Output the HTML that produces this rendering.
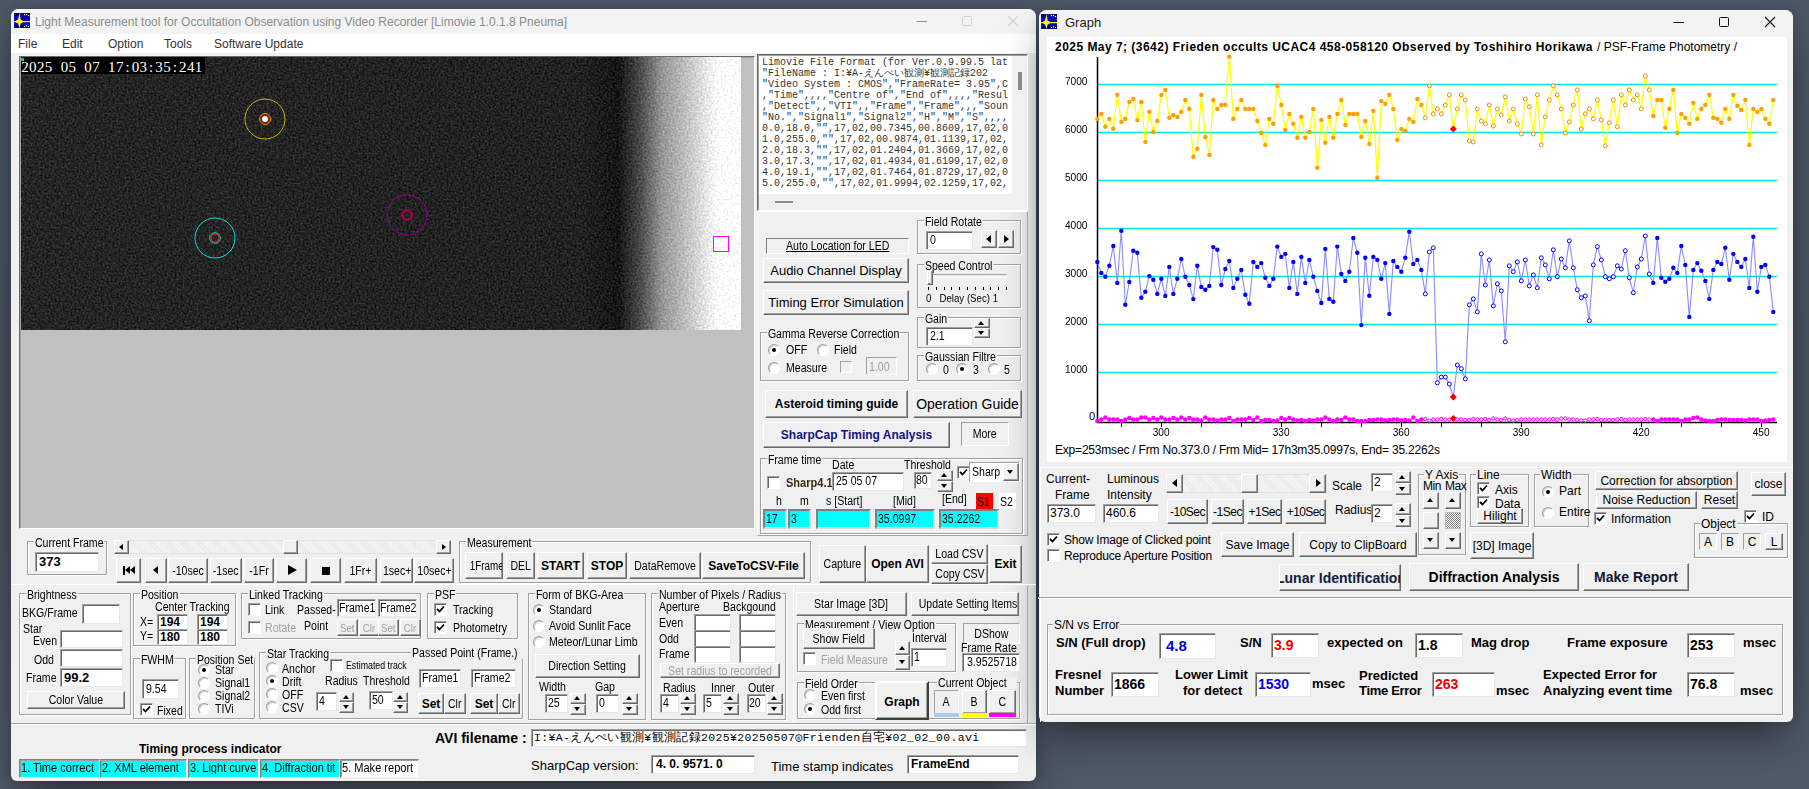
<!DOCTYPE html><html><head><meta charset="utf-8"><style>
*{margin:0;padding:0;box-sizing:border-box}
html,body{width:1809px;height:789px;overflow:hidden}
body{position:relative;background:#4c5664;font-family:"Liberation Sans",sans-serif;}
.t{position:absolute;white-space:nowrap}
.btn{position:absolute;background:#f0f0f0;border:1px solid;border-color:#fff #696969 #696969 #fff;box-shadow:inset -1px -1px 0 #a0a0a0;text-align:center;white-space:nowrap;overflow:hidden}
.ed{position:absolute;background:#fff;border:1px solid;border-color:#a0a0a0 #e8e8e8 #e8e8e8 #a0a0a0;box-shadow:inset 1px 1px 0 #696969;white-space:nowrap;overflow:hidden}
.gb{position:absolute;border:1px solid #a0a0a0;box-shadow:inset 1px 1px 0 #fff, 1px 1px 0 #fff}
.gl{position:absolute;background:#f0f0f0;padding:0 1px;white-space:nowrap}
.cb{position:absolute;width:13px;height:13px;background:#fff;border:1px solid;border-color:#a0a0a0 #fff #fff #a0a0a0;box-shadow:inset 1px 1px 0 #696969}
.rb{position:absolute;width:12px;height:12px;border-radius:6px;background:#fff;border:1px solid;border-color:#a0a0a0 #fff #fff #a0a0a0;box-shadow:inset 1px 1px 0 #d0d0d0}
.tri{position:absolute;width:0;height:0;border-left:3.5px solid transparent;border-right:3.5px solid transparent}
.tri.up{border-bottom:4px solid #000}
.tri.dn{border-top:4px solid #000}
.win{position:absolute;background:#f0f0f0;overflow:hidden}
</style></head><body><div style="position:absolute;left:0;top:0;width:1809px;height:789px;background:linear-gradient(180deg,#4d5765 0%,#4a5360 60%,#505a68 100%)"></div>
<div class="win" style="left:11px;top:9px;width:1025px;height:772px;border-radius:8px 8px 6px 6px;box-shadow:0 20px 40px -8px rgba(0,0,0,0.5), 0 0 12px rgba(0,0,0,0.12)"></div>
<div style="position:absolute;left:11px;top:9px;width:1025px;height:25px;background:#f3f3f3;border-radius:8px 8px 0 0"></div>
<div style="position:absolute;left:11px;top:34px;width:1025px;height:19px;background:#fff"></div>
<div class="win" style="left:1039px;top:10px;width:754px;height:712px;border-radius:8px 8px 6px 6px;box-shadow:0 20px 40px -8px rgba(0,0,0,0.5), 0 0 12px rgba(0,0,0,0.12)"></div>
<div style="position:absolute;left:1039px;top:10px;width:754px;height:27px;background:#f3f3f3;border-radius:8px 8px 0 0"></div>
<svg style="position:absolute;left:14px;top:12px" width="17" height="17" viewBox="0 0 17 17"><rect x="0" y="1" width="16" height="15" fill="#0a0ac8"/><rect x="0" y="1" width="5" height="3" fill="#000060"/><rect x="9" y="1" width="7" height="2" fill="#000060"/><rect x="1" y="13" width="15" height="3" fill="#000070"/><rect x="8" y="4" width="7" height="4" fill="#0000a0"/><circle cx="10.5" cy="2.5" r="0.7" fill="#fff"/><circle cx="12.5" cy="2.5" r="0.7" fill="#fff"/><circle cx="14.5" cy="3.5" r="0.7" fill="#fff"/><circle cx="10.5" cy="14.5" r="0.7" fill="#fff"/><circle cx="12.5" cy="14" r="0.7" fill="#fff"/><circle cx="14.5" cy="14.5" r="0.7" fill="#fff"/><rect x="0" y="9" width="16" height="1.2" fill="#ffff00"/><path d="M5.4 0.5 L6.6 7.5 L10 9.6 L6.6 11.6 L5.4 16.5 L4.2 11.6 L0.5 9.6 L4.2 7.5 Z" fill="#ffff00"/></svg>
<svg style="position:absolute;left:1041px;top:13px" width="17" height="17" viewBox="0 0 17 17"><rect x="0" y="1" width="16" height="15" fill="#0a0ac8"/><rect x="0" y="1" width="5" height="3" fill="#000060"/><rect x="9" y="1" width="7" height="2" fill="#000060"/><rect x="1" y="13" width="15" height="3" fill="#000070"/><rect x="8" y="4" width="7" height="4" fill="#0000a0"/><circle cx="10.5" cy="2.5" r="0.7" fill="#fff"/><circle cx="12.5" cy="2.5" r="0.7" fill="#fff"/><circle cx="14.5" cy="3.5" r="0.7" fill="#fff"/><circle cx="10.5" cy="14.5" r="0.7" fill="#fff"/><circle cx="12.5" cy="14" r="0.7" fill="#fff"/><circle cx="14.5" cy="14.5" r="0.7" fill="#fff"/><rect x="0" y="9" width="16" height="1.2" fill="#ffff00"/><path d="M5.4 0.5 L6.6 7.5 L10 9.6 L6.6 11.6 L5.4 16.5 L4.2 11.6 L0.5 9.6 L4.2 7.5 Z" fill="#ffff00"/></svg>
<div class="t" style="left:35px;top:15px;font-size:12px;line-height:14px;color:#8c8c8c;">Light Measurement tool for Occultation Observation using Video Recorder [Limovie 1.0.1.8 Pneuma]</div>
<div class="t" style="left:1065px;top:16px;font-size:13px;line-height:14px;color:#1a1a1a;">Graph</div>
<svg style="position:absolute;left:916px;top:15px" width="12" height="12"><line x1="0.5" y1="6.5" x2="11" y2="6.5" stroke="#8a8a8a" stroke-width="1"/></svg>
<svg style="position:absolute;left:961px;top:15px" width="12" height="12"><rect x="1.5" y="1.5" width="9" height="9" rx="1" stroke="#cfcfcf" fill="none" stroke-width="1"/></svg>
<svg style="position:absolute;left:1007px;top:15px" width="12" height="12"><path d="M1 1 L11 11 M11 1 L1 11" stroke="#cfcfcf" stroke-width="1.1"/></svg>
<svg style="position:absolute;left:1673px;top:16px" width="12" height="12"><line x1="0.5" y1="6.5" x2="11" y2="6.5" stroke="#111" stroke-width="1"/></svg>
<svg style="position:absolute;left:1718px;top:16px" width="12" height="12"><rect x="1.5" y="1.5" width="9" height="9" rx="1" stroke="#111" fill="none" stroke-width="1"/></svg>
<svg style="position:absolute;left:1764px;top:16px" width="12" height="12"><path d="M1 1 L11 11 M11 1 L1 11" stroke="#111" stroke-width="1.1"/></svg>
<div class="t" style="left:18px;top:37px;font-size:12px;line-height:14px;color:#333;">File</div>
<div class="t" style="left:62px;top:37px;font-size:12px;line-height:14px;color:#333;">Edit</div>
<div class="t" style="left:108px;top:37px;font-size:12px;line-height:14px;color:#333;">Option</div>
<div class="t" style="left:164px;top:37px;font-size:12px;line-height:14px;color:#333;">Tools</div>
<div class="t" style="left:214px;top:37px;font-size:12px;line-height:14px;color:#333;">Software Update</div>
<div style="position:absolute;left:19px;top:56px;width:736px;height:473px;border:1px solid;border-color:#696969 #fff #fff #696969;box-shadow:inset 1px 1px 0 #a0a0a0;background:#c0c0c0"></div>
<svg style="position:absolute;left:21px;top:57px" width="720" height="273" viewBox="0 0 720 273">
<defs>
<linearGradient id="vg" x1="0" y1="0" x2="1" y2="0">
<stop offset="0" stop-color="#252525"/>
<stop offset="0.78" stop-color="#212121"/>
<stop offset="0.83" stop-color="#151515"/>
<stop offset="0.86" stop-color="#4a4a4a"/>
<stop offset="0.89" stop-color="#959595"/>
<stop offset="0.93" stop-color="#c8c8c8"/>
<stop offset="0.955" stop-color="#ececec"/>
<stop offset="0.97" stop-color="#fff"/>
<stop offset="1" stop-color="#fff"/>
</linearGradient>
<filter id="nz" x="0" y="0" width="100%" height="100%" color-interpolation-filters="sRGB">
<feTurbulence type="fractalNoise" baseFrequency="0.5" numOctaves="2" seed="3" result="t"/>
<feColorMatrix in="t" type="matrix" values="1 0 0 0 0  1 0 0 0 0  1 0 0 0 0  0 0 0 0 1" result="g"/>
<feComposite in="SourceGraphic" in2="g" operator="arithmetic" k1="0" k2="1" k3="0.34" k4="-0.17"/>
</filter>
</defs>
<rect width="720" height="273" fill="url(#vg)" filter="url(#nz)"/>
<rect x="0" y="0" width="184" height="17" fill="#000"/>
<circle cx="244" cy="62" r="20" fill="none" stroke="#c8b400" stroke-width="1"/>
<circle cx="244" cy="62" r="5.5" fill="none" stroke="#d8a000" stroke-width="1"/>
<circle cx="244" cy="62" r="4.3" fill="none" stroke="#c02000" stroke-width="1.2"/>
<circle cx="244" cy="62" r="3" fill="#fff"/>
<circle cx="194" cy="181" r="20" fill="none" stroke="#00e0e0" stroke-width="1"/>
<circle cx="194" cy="181" r="5.3" fill="none" stroke="#00e0e0" stroke-width="1"/>
<circle cx="194" cy="181" r="4" fill="none" stroke="#e02020" stroke-width="1.3"/>
<circle cx="386" cy="158" r="20" fill="none" stroke="#900090" stroke-width="1"/>
<circle cx="386" cy="158" r="5.5" fill="none" stroke="#900090" stroke-width="1"/>
<circle cx="386" cy="158" r="4.3" fill="none" stroke="#d00020" stroke-width="1.3"/>
<rect x="692.5" y="179.5" width="15" height="15" fill="none" stroke="#ff00ff" stroke-width="1"/>
</svg>
<div class="t" style="left:21px;top:60px;font-size:15px;line-height:14px;color:#fff;font-family:'Liberation Serif',serif;font-weight:normal"><span style="display:inline-block;width:7.9px;text-align:center">2</span><span style="display:inline-block;width:7.9px;text-align:center">0</span><span style="display:inline-block;width:7.9px;text-align:center">2</span><span style="display:inline-block;width:7.9px;text-align:center">5</span><span style="display:inline-block;width:7.9px;text-align:center">&nbsp;</span><span style="display:inline-block;width:7.9px;text-align:center">0</span><span style="display:inline-block;width:7.9px;text-align:center">5</span><span style="display:inline-block;width:7.9px;text-align:center">&nbsp;</span><span style="display:inline-block;width:7.9px;text-align:center">0</span><span style="display:inline-block;width:7.9px;text-align:center">7</span><span style="display:inline-block;width:7.9px;text-align:center">&nbsp;</span><span style="display:inline-block;width:7.9px;text-align:center">1</span><span style="display:inline-block;width:7.9px;text-align:center">7</span><span style="display:inline-block;width:7.9px;text-align:center">:</span><span style="display:inline-block;width:7.9px;text-align:center">0</span><span style="display:inline-block;width:7.9px;text-align:center">3</span><span style="display:inline-block;width:7.9px;text-align:center">:</span><span style="display:inline-block;width:7.9px;text-align:center">3</span><span style="display:inline-block;width:7.9px;text-align:center">5</span><span style="display:inline-block;width:7.9px;text-align:center">:</span><span style="display:inline-block;width:7.9px;text-align:center">2</span><span style="display:inline-block;width:7.9px;text-align:center">4</span><span style="display:inline-block;width:7.9px;text-align:center">1</span></div>
<div style="position:absolute;left:21px;top:58px;width:3px;height:3px;background:#20e020"></div>
<div style="position:absolute;left:757px;top:54px;width:271px;height:157px;border:1px solid;border-color:#696969 #fff #fff #696969;box-shadow:inset 1px 1px 0 #a0a0a0;background:#f0f0f0"></div>
<div style="position:absolute;left:759px;top:56px;width:253px;height:138px;background:#fff"></div>
<div class="t" style="left:762px;top:57px;font-size:10px;line-height:11px;font-family:'Liberation Mono',monospace;color:#333;overflow:hidden;width:250px;height:138px">Limovie File Format (for Ver.0.9.99.5 lat<br>&quot;FileName : I:¥A-えんぺい観測¥観測記録202<br>&quot;Video System : CMOS&quot;,&quot;FrameRate= 3.95&quot;,C<br>,&quot;Time&quot;,,,,&quot;Centre of&quot;,&quot;End of&quot;,,,,&quot;Resul<br>,&quot;Detect&quot;,,&quot;VTI&quot;,,&quot;Frame&quot;,&quot;Frame&quot;,,,&quot;Soun<br>&quot;No.&quot;,&quot;Signal1&quot;,&quot;Signal2&quot;,&quot;H&quot;,&quot;M&quot;,&quot;S&quot;,,,,<br>0.0,18.0,&quot;&quot;,17,02,00.7345,00.8609,17,02,0<br>1.0,255.0,&quot;&quot;,17,02,00.9874,01.1139,17,02,<br>2.0,18.3,&quot;&quot;,17,02,01.2404,01.3669,17,02,0<br>3.0,17.3,&quot;&quot;,17,02,01.4934,01.6199,17,02,0<br>4.0,19.1,&quot;&quot;,17,02,01.7464,01.8729,17,02,0<br>5.0,255.0,&quot;&quot;,17,02,01.9994,02.1259,17,02,</div>
<div style="position:absolute;left:1018px;top:72px;width:4px;height:18px;background:#8a8a8a"></div>
<div style="position:absolute;left:775px;top:201px;width:18px;height:2px;background:#8a8a8a"></div>
<div style="position:absolute;left:757px;top:211px;width:271px;height:325px;border:1px solid;border-color:#fff #a0a0a0 #a0a0a0 #fff"></div>
<div class="gb" style="left:917px;top:220px;width:104px;height:34px;"></div>
<div class="gl" style="left:924px;top:216px;font-size:12px;line-height:12px;background:none;padding:0"><span style="display:inline-block;background:#f0f0f0;padding:0 1px;transform:scaleX(0.88);transform-origin:0 50%">Field Rotate</span></div>
<div class="ed" style="left:926px;top:231px;width:47px;height:19px;font-size:12px;line-height:17px;color:#000;padding-left:3px;"><span style="display:inline-block;transform:scaleX(0.88);transform-origin:0 50%">0</span></div>
<div class="btn" style="left:981px;top:230px;width:16px;height:18px;font-size:12px;line-height:17px;color:#000;"><div style="position:absolute;left:4px;top:4px;width:0;height:0;border-top:4px solid transparent;border-bottom:4px solid transparent;border-right:5px solid #000"></div></div>
<div class="btn" style="left:998px;top:230px;width:16px;height:18px;font-size:12px;line-height:17px;color:#000;"><div style="position:absolute;left:5px;top:4px;width:0;height:0;border-top:4px solid transparent;border-bottom:4px solid transparent;border-left:5px solid #000"></div></div>
<div style="position:absolute;left:766px;top:238px;width:143px;height:16px;border:1px solid;border-color:#808080 #fff #fff #808080;background:#f0f0f0"></div>
<div class="t" style="left:766px;top:240px;font-size:12px;line-height:12px;color:#000;width:143px;text-align:center;"><span style="display:inline-block;transform:scaleX(0.88);transform-origin:50% 50%"><u>Auto Location for LED</u></span></div>
<div class="btn" style="left:763px;top:258px;width:146px;height:25px;font-size:13px;line-height:24px;color:#000;">Audio Channel Display</div>
<div class="btn" style="left:763px;top:290px;width:146px;height:25px;font-size:13px;line-height:24px;color:#000;">Timing Error Simulation</div>
<div class="gb" style="left:917px;top:264px;width:104px;height:44px;"></div>
<div class="gl" style="left:924px;top:260px;font-size:12px;line-height:12px;background:none;padding:0"><span style="display:inline-block;background:#f0f0f0;padding:0 1px;transform:scaleX(0.88);transform-origin:0 50%">Speed Control</span></div>
<div style="position:absolute;left:928px;top:274px;width:79px;height:4px;border:1px solid;border-color:#a0a0a0 #fff #fff #a0a0a0;background:#f0f0f0"></div>
<div class="btn" style="left:927px;top:270px;width:6px;height:15px;font-size:12px;line-height:14px;color:#000;"></div>
<div style="position:absolute;left:928.0px;top:287px;width:1px;height:3px;background:#000"></div>
<div style="position:absolute;left:935.8px;top:287px;width:1px;height:3px;background:#000"></div>
<div style="position:absolute;left:943.6px;top:287px;width:1px;height:3px;background:#000"></div>
<div style="position:absolute;left:951.4px;top:287px;width:1px;height:3px;background:#000"></div>
<div style="position:absolute;left:959.2px;top:287px;width:1px;height:3px;background:#000"></div>
<div style="position:absolute;left:967.0px;top:287px;width:1px;height:3px;background:#000"></div>
<div style="position:absolute;left:974.8px;top:287px;width:1px;height:3px;background:#000"></div>
<div style="position:absolute;left:982.6px;top:287px;width:1px;height:3px;background:#000"></div>
<div style="position:absolute;left:990.4px;top:287px;width:1px;height:3px;background:#000"></div>
<div style="position:absolute;left:998.2px;top:287px;width:1px;height:3px;background:#000"></div>
<div style="position:absolute;left:1006.0px;top:287px;width:1px;height:3px;background:#000"></div>
<div class="t" style="left:926px;top:293px;font-size:11px;line-height:11px;color:#000;"><span style="display:inline-block;transform:scaleX(0.88);transform-origin:0 50%">0&nbsp;&nbsp;&nbsp;Delay (Sec) 1</span></div>
<div class="gb" style="left:917px;top:317px;width:104px;height:31px;"></div>
<div class="gl" style="left:924px;top:313px;font-size:12px;line-height:12px;background:none;padding:0"><span style="display:inline-block;background:#f0f0f0;padding:0 1px;transform:scaleX(0.88);transform-origin:0 50%">Gain</span></div>
<div class="ed" style="left:926px;top:327px;width:47px;height:19px;font-size:12px;line-height:17px;color:#000;padding-left:3px;"><span style="display:inline-block;transform:scaleX(0.88);transform-origin:0 50%">2.1</span></div>
<div class="btn" style="left:974px;top:318px;width:16px;height:10px;"><div class="tri up" style="left:3px;top:2px"></div></div>
<div class="btn" style="left:974px;top:328px;width:16px;height:10px;"><div class="tri dn" style="left:3px;top:2px"></div></div>
<div class="gb" style="left:917px;top:355px;width:104px;height:26px;"></div>
<div class="gl" style="left:924px;top:351px;font-size:12px;line-height:12px;background:none;padding:0"><span style="display:inline-block;background:#f0f0f0;padding:0 1px;transform:scaleX(0.88);transform-origin:0 50%">Gaussian Filtre</span></div>
<div class="rb" style="left:926px;top:363px;"></div>
<div class="t" style="left:943px;top:364px;font-size:12px;line-height:12px;color:#000;"><span style="display:inline-block;transform:scaleX(0.88);transform-origin:0 50%">0</span></div>
<div class="rb" style="left:956px;top:363px;"><div style="position:absolute;left:3px;top:3px;width:4px;height:4px;border-radius:2px;background:#000"></div></div>
<div class="t" style="left:973px;top:364px;font-size:12px;line-height:12px;color:#000;"><span style="display:inline-block;transform:scaleX(0.88);transform-origin:0 50%">3</span></div>
<div class="rb" style="left:988px;top:363px;"></div>
<div class="t" style="left:1004px;top:364px;font-size:12px;line-height:12px;color:#000;"><span style="display:inline-block;transform:scaleX(0.88);transform-origin:0 50%">5</span></div>
<div class="gb" style="left:760px;top:332px;width:149px;height:49px;"></div>
<div class="gl" style="left:767px;top:328px;font-size:12px;line-height:12px;background:none;padding:0"><span style="display:inline-block;background:#f0f0f0;padding:0 1px;transform:scaleX(0.88);transform-origin:0 50%">Gamma Reverse Correction</span></div>
<div class="rb" style="left:768px;top:344px;"><div style="position:absolute;left:3px;top:3px;width:4px;height:4px;border-radius:2px;background:#000"></div></div>
<div class="t" style="left:786px;top:344px;font-size:12px;line-height:12px;color:#000;"><span style="display:inline-block;transform:scaleX(0.88);transform-origin:0 50%">OFF</span></div>
<div class="rb" style="left:817px;top:344px;"></div>
<div class="t" style="left:834px;top:344px;font-size:12px;line-height:12px;color:#000;"><span style="display:inline-block;transform:scaleX(0.88);transform-origin:0 50%">Field</span></div>
<div class="rb" style="left:768px;top:362px;"></div>
<div class="t" style="left:786px;top:362px;font-size:12px;line-height:12px;color:#000;"><span style="display:inline-block;transform:scaleX(0.88);transform-origin:0 50%">Measure</span></div>
<div style="position:absolute;left:840px;top:361px;width:12px;height:12px;border:1px solid;border-color:#a0a0a0 #fff #fff #a0a0a0;background:#f0f0f0"></div>
<div style="position:absolute;left:866px;top:357px;width:31px;height:18px;border:1px solid;border-color:#a0a0a0 #fff #fff #a0a0a0;background:#f0f0f0"></div>
<div class="t" style="left:869px;top:361px;font-size:12px;line-height:12px;color:#a0a0a0;"><span style="display:inline-block;transform:scaleX(0.88);transform-origin:0 50%">1.00</span></div>
<div class="btn" style="left:765px;top:390px;width:143px;height:28px;font-size:12px;line-height:27px;color:#000;font-weight:bold;">Asteroid timing guide</div>
<div class="btn" style="left:913px;top:390px;width:109px;height:28px;font-size:14px;line-height:27px;color:#000;">Operation Guide</div>
<div class="btn" style="left:763px;top:422px;width:187px;height:26px;font-size:12px;line-height:25px;color:#141480;font-weight:bold;">SharpCap Timing Analysis</div>
<div class="btn" style="left:961px;top:422px;width:48px;height:24px;font-size:12px;line-height:23px;color:#000;border-color:#a0a0a0 #fff #fff #a0a0a0;box-shadow:none"><span style="display:inline-block;transform:scaleX(0.88);transform-origin:50% 50%">More</span></div>
<div class="gb" style="left:760px;top:458px;width:263px;height:76px;"></div>
<div class="gl" style="left:767px;top:454px;font-size:12px;line-height:12px;background:none;padding:0"><span style="display:inline-block;background:#f0f0f0;padding:0 1px;transform:scaleX(0.88);transform-origin:0 50%">Frame time</span></div>
<div class="cb" style="left:767px;top:476px;"></div>
<div class="t" style="left:786px;top:477px;font-size:12px;line-height:12px;color:#3c2c10;font-weight:bold;"><span style="display:inline-block;transform:scaleX(0.92);transform-origin:0 50%">Sharp4.1</span></div>
<div class="t" style="left:832px;top:459px;font-size:12px;line-height:12px;color:#000;"><span style="display:inline-block;transform:scaleX(0.88);transform-origin:0 50%">Date</span></div>
<div class="ed" style="left:832px;top:472px;width:72px;height:19px;font-size:12px;line-height:17px;color:#000;padding-left:3px;"><span style="display:inline-block;transform:scaleX(0.88);transform-origin:0 50%">25 05 07</span></div>
<div class="t" style="left:904px;top:459px;font-size:12px;line-height:12px;color:#000;"><span style="display:inline-block;transform:scaleX(0.88);transform-origin:0 50%">Threshold</span></div>
<div class="ed" style="left:914px;top:472px;width:18px;height:17px;font-size:12px;line-height:15px;color:#000;padding-left:1px;"><span style="display:inline-block;transform:scaleX(0.88);transform-origin:0 50%">80</span></div>
<div class="btn" style="left:937px;top:470px;width:16px;height:11px;"><div class="tri up" style="left:3px;top:2px"></div></div>
<div class="btn" style="left:937px;top:481px;width:16px;height:11px;"><div class="tri dn" style="left:3px;top:2px"></div></div>
<div class="cb" style="left:957px;top:466px;"><svg width="9" height="9" viewBox="0 0 9 9" style="position:absolute;left:1px;top:1px"><path d="M1 4 L3.5 6.5 L8 1.5" stroke="#000" stroke-width="1.8" fill="none"/></svg></div>
<div style="position:absolute;left:969px;top:462px;width:51px;height:20px;border:1px solid;border-color:#a0a0a0 #fff #fff #a0a0a0;background:#fff"></div>
<div class="t" style="left:972px;top:466px;font-size:12px;line-height:12px;color:#000;"><span style="display:inline-block;transform:scaleX(0.88);transform-origin:0 50%">Sharp</span></div>
<div class="btn" style="left:1003px;top:463px;width:16px;height:18px;font-size:12px;line-height:17px;color:#000;"><div class="tri dn" style="left:3px;top:6px"></div></div>
<div class="t" style="left:776px;top:495px;font-size:12px;line-height:12px;color:#000;"><span style="display:inline-block;transform:scaleX(0.88);transform-origin:0 50%">h</span></div>
<div class="t" style="left:800px;top:495px;font-size:12px;line-height:12px;color:#000;"><span style="display:inline-block;transform:scaleX(0.88);transform-origin:0 50%">m</span></div>
<div class="t" style="left:826px;top:495px;font-size:12px;line-height:12px;color:#000;"><span style="display:inline-block;transform:scaleX(0.88);transform-origin:0 50%">s [Start]</span></div>
<div class="t" style="left:893px;top:495px;font-size:12px;line-height:12px;color:#000;"><span style="display:inline-block;transform:scaleX(0.88);transform-origin:0 50%">[Mid]</span></div>
<div class="t" style="left:942px;top:493px;font-size:12px;line-height:12px;color:#000;"><span style="display:inline-block;transform:scaleX(0.88);transform-origin:0 50%">[End]</span></div>
<div style="position:absolute;left:976px;top:493px;width:17px;height:16px;background:#f00"></div>
<div class="t" style="left:977px;top:496px;font-size:12px;line-height:12px;color:#000;"><span style="display:inline-block;transform:scaleX(0.88);transform-origin:0 50%">S1</span></div>
<div style="position:absolute;left:999px;top:493px;width:17px;height:16px;background:#fff"></div>
<div class="t" style="left:1000px;top:496px;font-size:12px;line-height:12px;color:#000;"><span style="display:inline-block;transform:scaleX(0.88);transform-origin:0 50%">S2</span></div>
<div style="position:absolute;left:763px;top:509px;width:24px;height:20px;background:#0ff;border:2px solid;border-color:#808080 #d8d8d8 #d8d8d8 #808080"></div>
<div class="t" style="left:766px;top:513px;font-size:12px;line-height:12px;color:#000;"><span style="display:inline-block;transform:scaleX(0.88);transform-origin:0 50%">17</span></div>
<div style="position:absolute;left:788px;top:509px;width:23px;height:20px;background:#0ff;border:2px solid;border-color:#808080 #d8d8d8 #d8d8d8 #808080"></div>
<div class="t" style="left:791px;top:513px;font-size:12px;line-height:12px;color:#000;"><span style="display:inline-block;transform:scaleX(0.88);transform-origin:0 50%">3</span></div>
<div style="position:absolute;left:816px;top:509px;width:55px;height:20px;background:#0ff;border:2px solid;border-color:#808080 #d8d8d8 #d8d8d8 #808080"></div>
<div class="t" style="left:819px;top:513px;font-size:12px;line-height:12px;color:#000;"><span style="display:inline-block;transform:scaleX(0.88);transform-origin:0 50%"></span></div>
<div style="position:absolute;left:875px;top:509px;width:60px;height:20px;background:#0ff;border:2px solid;border-color:#808080 #d8d8d8 #d8d8d8 #808080"></div>
<div class="t" style="left:878px;top:513px;font-size:12px;line-height:12px;color:#000;"><span style="display:inline-block;transform:scaleX(0.88);transform-origin:0 50%">35.0997</span></div>
<div style="position:absolute;left:939px;top:509px;width:60px;height:20px;background:#0ff;border:2px solid;border-color:#808080 #d8d8d8 #d8d8d8 #808080"></div>
<div class="t" style="left:942px;top:513px;font-size:12px;line-height:12px;color:#000;"><span style="display:inline-block;transform:scaleX(0.88);transform-origin:0 50%">35.2262</span></div>
<div class="gb" style="left:27px;top:541px;width:80px;height:34px;"></div>
<div class="gl" style="left:34px;top:537px;font-size:12px;line-height:12px;background:none;padding:0"><span style="display:inline-block;background:#f0f0f0;padding:0 1px;transform:scaleX(0.88);transform-origin:0 50%">Current Frame</span></div>
<div class="ed" style="left:35px;top:552px;width:64px;height:20px;font-size:13px;line-height:18px;color:#000;padding-left:3px;font-weight:bold;">373</div>
<div style="position:absolute;left:114px;top:540px;width:337px;height:14px;border:1px solid;border-color:#e0e0e0;background:repeating-linear-gradient(45deg,#f6f6f6 0 1px,#e9e9e9 1px 2px)"></div>
<div class="btn" style="left:114px;top:540px;width:15px;height:14px;font-size:12px;line-height:13px;color:#000;"><div style="position:absolute;left:4px;top:3px;width:0;height:0;border-top:3.5px solid transparent;border-bottom:3.5px solid transparent;border-right:4px solid #000"></div></div>
<div class="btn" style="left:436px;top:540px;width:15px;height:14px;font-size:12px;line-height:13px;color:#000;"><div style="position:absolute;left:5px;top:3px;width:0;height:0;border-top:3.5px solid transparent;border-bottom:3.5px solid transparent;border-left:4px solid #000"></div></div>
<div class="btn" style="left:283px;top:540px;width:15px;height:14px;font-size:12px;line-height:13px;color:#000;"></div>
<div class="btn" style="left:116px;top:558px;width:25px;height:25px;font-size:12px;line-height:24px;color:#000;"><div style="position:absolute;left:6px;top:7px;width:2px;height:9px;background:#000"></div><div style="position:absolute;left:8px;top:7px;width:0;height:0;border-top:4.5px solid transparent;border-bottom:4.5px solid transparent;border-right:5px solid #000"></div><div style="position:absolute;left:13px;top:7px;width:0;height:0;border-top:4.5px solid transparent;border-bottom:4.5px solid transparent;border-right:5px solid #000"></div></div>
<div class="btn" style="left:145px;top:558px;width:22px;height:25px;font-size:12px;line-height:24px;color:#000;"><div style="position:absolute;left:7px;top:7px;width:0;height:0;border-top:4.5px solid transparent;border-bottom:4.5px solid transparent;border-right:5px solid #000"></div></div>
<div class="btn" style="left:168px;top:558px;width:40px;height:25px;font-size:12px;line-height:24px;color:#000;"><span style="display:inline-block;transform:scaleX(0.88);transform-origin:50% 50%">-10sec</span></div>
<div class="btn" style="left:210px;top:558px;width:32px;height:25px;font-size:12px;line-height:24px;color:#000;"><span style="display:inline-block;transform:scaleX(0.88);transform-origin:50% 50%">-1sec</span></div>
<div class="btn" style="left:244px;top:558px;width:30px;height:25px;font-size:12px;line-height:24px;color:#000;"><span style="display:inline-block;transform:scaleX(0.88);transform-origin:50% 50%">-1Fr</span></div>
<div class="btn" style="left:276px;top:558px;width:31px;height:25px;font-size:12px;line-height:24px;color:#000;"><div style="position:absolute;left:11px;top:6px;width:0;height:0;border-top:5.5px solid transparent;border-bottom:5.5px solid transparent;border-left:9px solid #000"></div></div>
<div class="btn" style="left:310px;top:558px;width:31px;height:25px;font-size:12px;line-height:24px;color:#000;"><div style="position:absolute;left:11px;top:8px;width:8px;height:8px;background:#000"></div></div>
<div class="btn" style="left:344px;top:558px;width:33px;height:25px;font-size:12px;line-height:24px;color:#000;"><span style="display:inline-block;transform:scaleX(0.88);transform-origin:50% 50%">1Fr+</span></div>
<div class="btn" style="left:380px;top:558px;width:33px;height:25px;font-size:12px;line-height:24px;color:#000;"><span style="display:inline-block;transform:scaleX(0.88);transform-origin:50% 50%">1sec+</span></div>
<div class="btn" style="left:414px;top:558px;width:40px;height:25px;font-size:12px;line-height:24px;color:#000;"><span style="display:inline-block;transform:scaleX(0.88);transform-origin:50% 50%">10sec+</span></div>
<div class="gb" style="left:459px;top:541px;width:352px;height:42px;"></div>
<div class="gl" style="left:466px;top:537px;font-size:12px;line-height:12px;background:none;padding:0"><span style="display:inline-block;background:#f0f0f0;padding:0 1px;transform:scaleX(0.88);transform-origin:0 50%">Measurement</span></div>
<div class="btn" style="left:465px;top:552px;width:38px;height:27px;font-size:12px;line-height:26px;color:#000;"><span style="display:inline-block;transform:scaleX(0.82);transform-origin:50% 50%">1Frame</span></div>
<div class="btn" style="left:506px;top:552px;width:29px;height:27px;font-size:12px;line-height:26px;color:#000;"><span style="display:inline-block;transform:scaleX(0.88);transform-origin:50% 50%">DEL</span></div>
<div class="btn" style="left:537px;top:552px;width:47px;height:27px;font-size:12px;line-height:26px;color:#000;font-weight:bold;">START</div>
<div class="btn" style="left:587px;top:552px;width:40px;height:27px;font-size:12px;line-height:26px;color:#000;font-weight:bold;">STOP</div>
<div class="btn" style="left:629px;top:552px;width:72px;height:27px;font-size:12px;line-height:26px;color:#000;"><span style="display:inline-block;transform:scaleX(0.88);transform-origin:50% 50%">DataRemove</span></div>
<div class="btn" style="left:702px;top:552px;width:103px;height:27px;font-size:12px;line-height:26px;color:#000;font-weight:bold;">SaveToCSV-File</div>
<div class="btn" style="left:819px;top:545px;width:47px;height:38px;font-size:12px;line-height:37px;color:#000;"><span style="display:inline-block;transform:scaleX(0.88);transform-origin:50% 50%">Capture</span></div>
<div class="btn" style="left:866px;top:545px;width:63px;height:38px;font-size:12px;line-height:37px;color:#000;font-weight:bold;">Open AVI</div>
<div class="btn" style="left:931px;top:544px;width:57px;height:20px;font-size:12px;line-height:19px;color:#000;"><span style="display:inline-block;transform:scaleX(0.88);transform-origin:50% 50%">Load CSV</span></div>
<div class="btn" style="left:931px;top:564px;width:57px;height:20px;font-size:12px;line-height:19px;color:#000;"><span style="display:inline-block;transform:scaleX(0.88);transform-origin:50% 50%">Copy CSV</span></div>
<div class="btn" style="left:989px;top:545px;width:33px;height:38px;font-size:12px;line-height:37px;color:#000;font-weight:bold;">Exit</div>
<div style="position:absolute;left:11px;top:584px;width:1025px;height:1px;background:#fff"></div>
<div class="gb" style="left:19px;top:593px;width:112px;height:122px;"></div>
<div class="gl" style="left:26px;top:589px;font-size:12px;line-height:12px;background:none;padding:0"><span style="display:inline-block;background:#f0f0f0;padding:0 1px;transform:scaleX(0.88);transform-origin:0 50%">Brightness</span></div>
<div class="t" style="left:22px;top:607px;font-size:12px;line-height:12px;color:#000;"><span style="display:inline-block;transform:scaleX(0.88);transform-origin:0 50%">BKG/Frame</span></div>
<div class="ed" style="left:82px;top:604px;width:38px;height:20px;font-size:12px;line-height:18px;color:#000;padding-left:3px;"></div>
<div class="t" style="left:23px;top:623px;font-size:12px;line-height:12px;color:#000;"><span style="display:inline-block;transform:scaleX(0.88);transform-origin:0 50%">Star</span></div>
<div class="t" style="left:33px;top:635px;font-size:12px;line-height:12px;color:#000;"><span style="display:inline-block;transform:scaleX(0.88);transform-origin:0 50%">Even</span></div>
<div class="ed" style="left:60px;top:630px;width:63px;height:18px;font-size:12px;line-height:16px;color:#000;padding-left:3px;"></div>
<div class="t" style="left:34px;top:654px;font-size:12px;line-height:12px;color:#000;"><span style="display:inline-block;transform:scaleX(0.88);transform-origin:0 50%">Odd</span></div>
<div class="ed" style="left:60px;top:649px;width:63px;height:18px;font-size:12px;line-height:16px;color:#000;padding-left:3px;"></div>
<div class="t" style="left:26px;top:672px;font-size:12px;line-height:12px;color:#000;"><span style="display:inline-block;transform:scaleX(0.88);transform-origin:0 50%">Frame</span></div>
<div class="ed" style="left:60px;top:668px;width:63px;height:19px;font-size:13px;line-height:17px;color:#000;padding-left:3px;font-weight:bold;">99.2</div>
<div class="btn" style="left:27px;top:691px;width:98px;height:18px;font-size:12px;line-height:17px;color:#000;"><span style="display:inline-block;transform:scaleX(0.88);transform-origin:50% 50%">Color Value</span></div>
<div class="gb" style="left:133px;top:593px;width:103px;height:53px;"></div>
<div class="gl" style="left:140px;top:589px;font-size:12px;line-height:12px;background:none;padding:0"><span style="display:inline-block;background:#f0f0f0;padding:0 1px;transform:scaleX(0.88);transform-origin:0 50%">Position</span></div>
<div class="t" style="left:155px;top:601px;font-size:12px;line-height:12px;color:#000;"><span style="display:inline-block;transform:scaleX(0.88);transform-origin:0 50%">Center Tracking</span></div>
<div class="t" style="left:140px;top:616px;font-size:12px;line-height:12px;color:#000;"><span style="display:inline-block;transform:scaleX(0.88);transform-origin:0 50%">X=</span></div>
<div class="ed" style="left:157px;top:614px;width:31px;height:16px;font-size:12px;line-height:14px;color:#000;padding-left:2px;font-weight:bold;">194</div>
<div class="t" style="left:140px;top:630px;font-size:12px;line-height:12px;color:#000;"><span style="display:inline-block;transform:scaleX(0.88);transform-origin:0 50%">Y=</span></div>
<div class="ed" style="left:157px;top:629px;width:31px;height:16px;font-size:12px;line-height:14px;color:#000;padding-left:2px;font-weight:bold;">180</div>
<div class="ed" style="left:197px;top:614px;width:31px;height:16px;font-size:12px;line-height:14px;color:#000;padding-left:2px;font-weight:bold;">194</div>
<div class="ed" style="left:197px;top:629px;width:31px;height:16px;font-size:12px;line-height:14px;color:#000;padding-left:2px;font-weight:bold;">180</div>
<div class="gb" style="left:133px;top:658px;width:53px;height:61px;"></div>
<div class="gl" style="left:140px;top:654px;font-size:12px;line-height:12px;background:none;padding:0"><span style="display:inline-block;background:#f0f0f0;padding:0 1px;transform:scaleX(0.88);transform-origin:0 50%">FWHM</span></div>
<div class="ed" style="left:142px;top:679px;width:37px;height:20px;font-size:12px;line-height:18px;color:#000;padding-left:3px;"><span style="display:inline-block;transform:scaleX(0.88);transform-origin:0 50%">9.54</span></div>
<div class="cb" style="left:140px;top:703px;"><svg width="9" height="9" viewBox="0 0 9 9" style="position:absolute;left:1px;top:1px"><path d="M1 4 L3.5 6.5 L8 1.5" stroke="#000" stroke-width="1.8" fill="none"/></svg></div>
<div class="t" style="left:157px;top:705px;font-size:12px;line-height:12px;color:#000;"><span style="display:inline-block;transform:scaleX(0.88);transform-origin:0 50%">Fixed</span></div>
<div class="gb" style="left:189px;top:658px;width:66px;height:61px;"></div>
<div class="gl" style="left:196px;top:654px;font-size:12px;line-height:12px;background:none;padding:0"><span style="display:inline-block;background:#f0f0f0;padding:0 1px;transform:scaleX(0.88);transform-origin:0 50%">Position Set</span></div>
<div class="rb" style="left:198px;top:664px;"><div style="position:absolute;left:3px;top:3px;width:4px;height:4px;border-radius:2px;background:#000"></div></div>
<div class="t" style="left:215px;top:664px;font-size:12px;line-height:12px;color:#000;"><span style="display:inline-block;transform:scaleX(0.88);transform-origin:0 50%">Star</span></div>
<div class="rb" style="left:198px;top:677px;"></div>
<div class="t" style="left:215px;top:677px;font-size:12px;line-height:12px;color:#000;"><span style="display:inline-block;transform:scaleX(0.88);transform-origin:0 50%">Signal1</span></div>
<div class="rb" style="left:198px;top:690px;"></div>
<div class="t" style="left:215px;top:690px;font-size:12px;line-height:12px;color:#000;"><span style="display:inline-block;transform:scaleX(0.88);transform-origin:0 50%">Signal2</span></div>
<div class="rb" style="left:198px;top:703px;"></div>
<div class="t" style="left:215px;top:703px;font-size:12px;line-height:12px;color:#000;"><span style="display:inline-block;transform:scaleX(0.88);transform-origin:0 50%">TIVi</span></div>
<div class="gb" style="left:241px;top:593px;width:180px;height:46px;"></div>
<div class="gl" style="left:248px;top:589px;font-size:12px;line-height:12px;background:none;padding:0"><span style="display:inline-block;background:#f0f0f0;padding:0 1px;transform:scaleX(0.88);transform-origin:0 50%">Linked Tracking</span></div>
<div class="cb" style="left:248px;top:603px;"></div>
<div class="t" style="left:265px;top:604px;font-size:12px;line-height:12px;color:#000;"><span style="display:inline-block;transform:scaleX(0.88);transform-origin:0 50%">Link</span></div>
<div class="t" style="left:297px;top:604px;font-size:12px;line-height:12px;color:#000;"><span style="display:inline-block;transform:scaleX(0.88);transform-origin:0 50%">Passed-</span></div>
<div class="cb" style="left:248px;top:621px;"></div>
<div class="t" style="left:265px;top:622px;font-size:12px;line-height:12px;color:#a0a0a0;"><span style="display:inline-block;transform:scaleX(0.88);transform-origin:0 50%">Rotate</span></div>
<div class="t" style="left:304px;top:620px;font-size:12px;line-height:12px;color:#000;"><span style="display:inline-block;transform:scaleX(0.88);transform-origin:0 50%">Point</span></div>
<div class="ed" style="left:337px;top:599px;width:39px;height:18px;font-size:12px;line-height:16px;color:#000;padding-left:1px;"><span style="display:inline-block;transform:scaleX(0.88);transform-origin:0 50%">Frame1</span></div>
<div class="ed" style="left:378px;top:599px;width:39px;height:18px;font-size:12px;line-height:16px;color:#000;padding-left:1px;"><span style="display:inline-block;transform:scaleX(0.88);transform-origin:0 50%">Frame2</span></div>
<div class="btn" style="left:337px;top:619px;width:21px;height:17px;font-size:11px;line-height:16px;color:#a0a0a0;"><span style="display:inline-block;transform:scaleX(0.88);transform-origin:50% 50%">Set</span></div>
<div class="btn" style="left:359px;top:619px;width:21px;height:17px;font-size:11px;line-height:16px;color:#a0a0a0;"><span style="display:inline-block;transform:scaleX(0.88);transform-origin:50% 50%">Clr</span></div>
<div class="btn" style="left:378px;top:619px;width:21px;height:17px;font-size:11px;line-height:16px;color:#a0a0a0;"><span style="display:inline-block;transform:scaleX(0.88);transform-origin:50% 50%">Set</span></div>
<div class="btn" style="left:400px;top:619px;width:21px;height:17px;font-size:11px;line-height:16px;color:#a0a0a0;"><span style="display:inline-block;transform:scaleX(0.88);transform-origin:50% 50%">Clr</span></div>
<div class="gb" style="left:427px;top:593px;width:91px;height:46px;"></div>
<div class="gl" style="left:434px;top:589px;font-size:12px;line-height:12px;background:none;padding:0"><span style="display:inline-block;background:#f0f0f0;padding:0 1px;transform:scaleX(0.88);transform-origin:0 50%">PSF</span></div>
<div class="cb" style="left:434px;top:603px;"><svg width="9" height="9" viewBox="0 0 9 9" style="position:absolute;left:1px;top:1px"><path d="M1 4 L3.5 6.5 L8 1.5" stroke="#000" stroke-width="1.8" fill="none"/></svg></div>
<div class="t" style="left:453px;top:604px;font-size:12px;line-height:12px;color:#000;"><span style="display:inline-block;transform:scaleX(0.88);transform-origin:0 50%">Tracking</span></div>
<div class="cb" style="left:434px;top:621px;"><svg width="9" height="9" viewBox="0 0 9 9" style="position:absolute;left:1px;top:1px"><path d="M1 4 L3.5 6.5 L8 1.5" stroke="#000" stroke-width="1.8" fill="none"/></svg></div>
<div class="t" style="left:453px;top:622px;font-size:12px;line-height:12px;color:#000;"><span style="display:inline-block;transform:scaleX(0.88);transform-origin:0 50%">Photometry</span></div>
<div class="gb" style="left:259px;top:652px;width:264px;height:67px;"></div>
<div class="gl" style="left:266px;top:648px;font-size:12px;line-height:12px;background:none;padding:0"><span style="display:inline-block;background:#f0f0f0;padding:0 1px;transform:scaleX(0.88);transform-origin:0 50%">Star Tracking</span></div>
<div class="rb" style="left:266px;top:662px;"></div>
<div class="t" style="left:282px;top:663px;font-size:12px;line-height:12px;color:#000;"><span style="display:inline-block;transform:scaleX(0.88);transform-origin:0 50%">Anchor</span></div>
<div class="rb" style="left:266px;top:675px;"><div style="position:absolute;left:3px;top:3px;width:4px;height:4px;border-radius:2px;background:#000"></div></div>
<div class="t" style="left:282px;top:676px;font-size:12px;line-height:12px;color:#000;"><span style="display:inline-block;transform:scaleX(0.88);transform-origin:0 50%">Drift</span></div>
<div class="rb" style="left:266px;top:688px;"></div>
<div class="t" style="left:282px;top:689px;font-size:12px;line-height:12px;color:#000;"><span style="display:inline-block;transform:scaleX(0.88);transform-origin:0 50%">OFF</span></div>
<div class="rb" style="left:266px;top:701px;"></div>
<div class="t" style="left:282px;top:702px;font-size:12px;line-height:12px;color:#000;"><span style="display:inline-block;transform:scaleX(0.88);transform-origin:0 50%">CSV</span></div>
<div class="cb" style="left:330px;top:659px;"></div>
<div class="t" style="left:346px;top:661px;font-size:10px;line-height:10px;color:#000;"><span style="display:inline-block;transform:scaleX(0.88);transform-origin:0 50%">Estimated track</span></div>
<div class="t" style="left:325px;top:675px;font-size:12px;line-height:12px;color:#000;"><span style="display:inline-block;transform:scaleX(0.88);transform-origin:0 50%">Radius</span></div>
<div class="t" style="left:363px;top:675px;font-size:12px;line-height:12px;color:#000;"><span style="display:inline-block;transform:scaleX(0.88);transform-origin:0 50%">Threshold</span></div>
<div class="ed" style="left:316px;top:692px;width:21px;height:19px;font-size:12px;line-height:17px;color:#000;padding-left:2px;"><span style="display:inline-block;transform:scaleX(0.88);transform-origin:0 50%">4</span></div>
<div class="btn" style="left:339px;top:692px;width:15px;height:10px;"><div class="tri up" style="left:3px;top:2px"></div></div>
<div class="btn" style="left:339px;top:702px;width:15px;height:11px;"><div class="tri dn" style="left:3px;top:2px"></div></div>
<div class="ed" style="left:369px;top:691px;width:24px;height:19px;font-size:12px;line-height:17px;color:#000;padding-left:2px;"><span style="display:inline-block;transform:scaleX(0.88);transform-origin:0 50%">50</span></div>
<div class="btn" style="left:393px;top:692px;width:15px;height:10px;"><div class="tri up" style="left:3px;top:2px"></div></div>
<div class="btn" style="left:393px;top:702px;width:15px;height:11px;"><div class="tri dn" style="left:3px;top:2px"></div></div>
<div class="t" style="left:411px;top:647px;font-size:12px;line-height:12px;color:#000;background:#f0f0f0;padding:0 1px"><span style="display:inline-block;transform:scaleX(0.88);transform-origin:0 50%">Passed Point (Frame.)</span></div>
<div class="ed" style="left:419px;top:669px;width:42px;height:19px;font-size:12px;line-height:17px;color:#000;padding-left:2px;"><span style="display:inline-block;transform:scaleX(0.88);transform-origin:0 50%">Frame1</span></div>
<div class="ed" style="left:471px;top:669px;width:45px;height:19px;font-size:12px;line-height:17px;color:#000;padding-left:2px;"><span style="display:inline-block;transform:scaleX(0.88);transform-origin:0 50%">Frame2</span></div>
<div class="btn" style="left:418px;top:693px;width:26px;height:21px;font-size:12px;line-height:20px;color:#000;font-weight:bold;">Set</div>
<div class="btn" style="left:444px;top:693px;width:22px;height:21px;font-size:12px;line-height:20px;color:#000;"><span style="display:inline-block;transform:scaleX(0.88);transform-origin:50% 50%">Clr</span></div>
<div class="btn" style="left:470px;top:693px;width:28px;height:21px;font-size:12px;line-height:20px;color:#000;font-weight:bold;">Set</div>
<div class="btn" style="left:498px;top:693px;width:22px;height:21px;font-size:12px;line-height:20px;color:#000;"><span style="display:inline-block;transform:scaleX(0.88);transform-origin:50% 50%">Clr</span></div>
<div class="gb" style="left:528px;top:593px;width:118px;height:127px;"></div>
<div class="gl" style="left:535px;top:589px;font-size:12px;line-height:12px;background:none;padding:0"><span style="display:inline-block;background:#f0f0f0;padding:0 1px;transform:scaleX(0.88);transform-origin:0 50%">Form of BKG-Area</span></div>
<div class="rb" style="left:533px;top:604px;"><div style="position:absolute;left:3px;top:3px;width:4px;height:4px;border-radius:2px;background:#000"></div></div>
<div class="t" style="left:549px;top:604px;font-size:12px;line-height:12px;color:#000;"><span style="display:inline-block;transform:scaleX(0.88);transform-origin:0 50%">Standard</span></div>
<div class="rb" style="left:533px;top:620px;"></div>
<div class="t" style="left:549px;top:620px;font-size:12px;line-height:12px;color:#000;"><span style="display:inline-block;transform:scaleX(0.88);transform-origin:0 50%">Avoid Sunlit Face</span></div>
<div class="rb" style="left:533px;top:636px;"></div>
<div class="t" style="left:549px;top:636px;font-size:12px;line-height:12px;color:#000;"><span style="display:inline-block;transform:scaleX(0.88);transform-origin:0 50%">Meteor/Lunar Limb</span></div>
<div class="btn" style="left:535px;top:654px;width:105px;height:24px;font-size:12px;line-height:23px;color:#000;"><span style="display:inline-block;transform:scaleX(0.88);transform-origin:50% 50%">Direction Setting</span></div>
<div class="t" style="left:539px;top:681px;font-size:12px;line-height:12px;color:#000;"><span style="display:inline-block;transform:scaleX(0.88);transform-origin:0 50%">Width</span></div>
<div class="t" style="left:595px;top:681px;font-size:12px;line-height:12px;color:#000;"><span style="display:inline-block;transform:scaleX(0.88);transform-origin:0 50%">Gap</span></div>
<div class="ed" style="left:545px;top:694px;width:23px;height:19px;font-size:12px;line-height:17px;color:#000;padding-left:2px;"><span style="display:inline-block;transform:scaleX(0.88);transform-origin:0 50%">25</span></div>
<div class="btn" style="left:570px;top:693px;width:16px;height:11px;"><div class="tri up" style="left:3px;top:2px"></div></div>
<div class="btn" style="left:570px;top:704px;width:16px;height:11px;"><div class="tri dn" style="left:3px;top:2px"></div></div>
<div class="ed" style="left:596px;top:694px;width:23px;height:19px;font-size:12px;line-height:17px;color:#000;padding-left:2px;"><span style="display:inline-block;transform:scaleX(0.88);transform-origin:0 50%">0</span></div>
<div class="btn" style="left:622px;top:693px;width:16px;height:11px;"><div class="tri up" style="left:3px;top:2px"></div></div>
<div class="btn" style="left:622px;top:704px;width:16px;height:11px;"><div class="tri dn" style="left:3px;top:2px"></div></div>
<div class="gb" style="left:651px;top:593px;width:135px;height:127px;"></div>
<div class="gl" style="left:658px;top:589px;font-size:12px;line-height:12px;background:none;padding:0"><span style="display:inline-block;background:#f0f0f0;padding:0 1px;transform:scaleX(0.88);transform-origin:0 50%">Number of Pixels / Radius</span></div>
<div class="t" style="left:659px;top:601px;font-size:12px;line-height:12px;color:#000;"><span style="display:inline-block;transform:scaleX(0.88);transform-origin:0 50%">Aperture</span></div>
<div class="t" style="left:723px;top:601px;font-size:12px;line-height:12px;color:#000;"><span style="display:inline-block;transform:scaleX(0.88);transform-origin:0 50%">Backgound</span></div>
<div class="t" style="left:659px;top:617px;font-size:12px;line-height:12px;color:#000;"><span style="display:inline-block;transform:scaleX(0.88);transform-origin:0 50%">Even</span></div>
<div class="ed" style="left:694px;top:614px;width:37px;height:17px;font-size:12px;line-height:15px;color:#000;padding-left:3px;"></div>
<div class="ed" style="left:739px;top:614px;width:37px;height:17px;font-size:12px;line-height:15px;color:#000;padding-left:3px;"></div>
<div class="t" style="left:659px;top:633px;font-size:12px;line-height:12px;color:#000;"><span style="display:inline-block;transform:scaleX(0.88);transform-origin:0 50%">Odd</span></div>
<div class="ed" style="left:694px;top:630px;width:37px;height:17px;font-size:12px;line-height:15px;color:#000;padding-left:3px;"></div>
<div class="ed" style="left:739px;top:630px;width:37px;height:17px;font-size:12px;line-height:15px;color:#000;padding-left:3px;"></div>
<div class="t" style="left:659px;top:648px;font-size:12px;line-height:12px;color:#000;"><span style="display:inline-block;transform:scaleX(0.88);transform-origin:0 50%">Frame</span></div>
<div class="ed" style="left:694px;top:646px;width:37px;height:17px;font-size:12px;line-height:15px;color:#000;padding-left:3px;"></div>
<div class="ed" style="left:739px;top:646px;width:37px;height:17px;font-size:12px;line-height:15px;color:#000;padding-left:3px;"></div>
<div class="btn" style="left:660px;top:663px;width:120px;height:15px;font-size:12px;line-height:14px;color:#a0a0a0;"><span style="display:inline-block;transform:scaleX(0.88);transform-origin:50% 50%">Set  radius to recorded</span></div>
<div class="t" style="left:663px;top:682px;font-size:12px;line-height:12px;color:#000;"><span style="display:inline-block;transform:scaleX(0.88);transform-origin:0 50%">Radius</span></div>
<div class="t" style="left:711px;top:682px;font-size:12px;line-height:12px;color:#000;"><span style="display:inline-block;transform:scaleX(0.88);transform-origin:0 50%">Inner</span></div>
<div class="t" style="left:748px;top:682px;font-size:12px;line-height:12px;color:#000;"><span style="display:inline-block;transform:scaleX(0.88);transform-origin:0 50%">Outer</span></div>
<div class="ed" style="left:660px;top:694px;width:19px;height:19px;font-size:12px;line-height:17px;color:#000;padding-left:2px;"><span style="display:inline-block;transform:scaleX(0.88);transform-origin:0 50%">4</span></div>
<div class="btn" style="left:680px;top:693px;width:16px;height:11px;"><div class="tri up" style="left:3px;top:2px"></div></div>
<div class="btn" style="left:680px;top:704px;width:16px;height:11px;"><div class="tri dn" style="left:3px;top:2px"></div></div>
<div class="ed" style="left:703px;top:694px;width:19px;height:19px;font-size:12px;line-height:17px;color:#000;padding-left:2px;"><span style="display:inline-block;transform:scaleX(0.88);transform-origin:0 50%">5</span></div>
<div class="btn" style="left:723px;top:693px;width:16px;height:11px;"><div class="tri up" style="left:3px;top:2px"></div></div>
<div class="btn" style="left:723px;top:704px;width:16px;height:11px;"><div class="tri dn" style="left:3px;top:2px"></div></div>
<div class="ed" style="left:747px;top:694px;width:19px;height:19px;font-size:12px;line-height:17px;color:#000;padding-left:1px;"><span style="display:inline-block;transform:scaleX(0.88);transform-origin:0 50%">20</span></div>
<div class="btn" style="left:767px;top:693px;width:16px;height:11px;"><div class="tri up" style="left:3px;top:2px"></div></div>
<div class="btn" style="left:767px;top:704px;width:16px;height:11px;"><div class="tri dn" style="left:3px;top:2px"></div></div>
<div style="position:absolute;left:793px;top:586px;width:235px;height:137px;border-right:1px solid #a0a0a0;border-left:1px solid #fff"></div>
<div class="btn" style="left:796px;top:592px;width:111px;height:24px;font-size:12px;line-height:23px;color:#000;"><span style="display:inline-block;transform:scaleX(0.88);transform-origin:50% 50%">Star Image [3D]</span></div>
<div class="btn" style="left:911px;top:592px;width:108px;height:24px;font-size:12px;line-height:23px;color:#000;"><span style="display:inline-block;transform:scaleX(0.88);transform-origin:50% 50%">Update Setting Items</span></div>
<div class="gb" style="left:797px;top:623px;width:159px;height:49px;"></div>
<div class="gl" style="left:804px;top:619px;font-size:12px;line-height:12px;background:none;padding:0"><span style="display:inline-block;background:#f0f0f0;padding:0 1px;transform:scaleX(0.88);transform-origin:0 50%">Measurement / View Option</span></div>
<div class="btn" style="left:803px;top:628px;width:72px;height:21px;font-size:12px;line-height:20px;color:#000;"><span style="display:inline-block;transform:scaleX(0.88);transform-origin:50% 50%">Show Field</span></div>
<div class="cb" style="left:803px;top:652px;"></div>
<div class="t" style="left:821px;top:654px;font-size:12px;line-height:12px;color:#a0a0a0;"><span style="display:inline-block;transform:scaleX(0.88);transform-origin:0 50%">Field Measure</span></div>
<div class="btn" style="left:895px;top:641px;width:15px;height:14px;"><div class="tri up" style="left:3px;top:4px"></div></div>
<div class="btn" style="left:895px;top:655px;width:15px;height:15px;"><div class="tri dn" style="left:3px;top:4px"></div></div>
<div class="t" style="left:912px;top:632px;font-size:12px;line-height:12px;color:#000;"><span style="display:inline-block;transform:scaleX(0.88);transform-origin:0 50%">Interval</span></div>
<div class="ed" style="left:911px;top:648px;width:36px;height:19px;font-size:12px;line-height:17px;color:#000;padding-left:2px;"><span style="display:inline-block;transform:scaleX(0.88);transform-origin:0 50%">1</span></div>
<div class="btn" style="left:963px;top:623px;width:57px;height:21px;font-size:12px;line-height:20px;color:#000;border-color:#a0a0a0 #fff #fff #a0a0a0;box-shadow:none"><span style="display:inline-block;transform:scaleX(0.88);transform-origin:50% 50%">DShow</span></div>
<div class="t" style="left:961px;top:642px;font-size:12px;line-height:12px;color:#000;"><span style="display:inline-block;transform:scaleX(0.88);transform-origin:0 50%">Frame Rate</span></div>
<div class="ed" style="left:962px;top:653px;width:58px;height:19px;font-size:12px;line-height:17px;color:#000;padding-left:4px;"><span style="display:inline-block;transform:scaleX(0.88);transform-origin:0 50%">3.9525718</span></div>
<div class="gb" style="left:797px;top:682px;width:223px;height:37px;"></div>
<div class="gl" style="left:804px;top:678px;font-size:12px;line-height:12px;background:none;padding:0"><span style="display:inline-block;background:#f0f0f0;padding:0 1px;transform:scaleX(0.88);transform-origin:0 50%">Field Order</span></div>
<div class="rb" style="left:804px;top:689px;"></div>
<div class="t" style="left:821px;top:690px;font-size:12px;line-height:12px;color:#000;"><span style="display:inline-block;transform:scaleX(0.88);transform-origin:0 50%">Even first</span></div>
<div class="rb" style="left:804px;top:703px;"><div style="position:absolute;left:3px;top:3px;width:4px;height:4px;border-radius:2px;background:#000"></div></div>
<div class="t" style="left:821px;top:704px;font-size:12px;line-height:12px;color:#000;"><span style="display:inline-block;transform:scaleX(0.88);transform-origin:0 50%">Odd first</span></div>
<div class="btn" style="left:875px;top:681px;width:54px;height:39px;font-size:12px;line-height:38px;color:#000;font-weight:bold;border:2px solid;border-color:#fff #404040 #404040 #fff">Graph</div>
<div class="t" style="left:937px;top:677px;font-size:12px;line-height:12px;color:#000;background:#f0f0f0;padding:0 1px"><span style="display:inline-block;transform:scaleX(0.88);transform-origin:0 50%">Current Object</span></div>
<div class="btn" style="left:934px;top:690px;width:25px;height:24px;font-size:12px;line-height:23px;color:#000;border-color:#a0a0a0 #fff #fff #a0a0a0;box-shadow:none"><span style="display:inline-block;transform:scaleX(0.88);transform-origin:50% 50%">A</span></div>
<div class="btn" style="left:962px;top:690px;width:25px;height:24px;font-size:12px;line-height:23px;color:#000;"><span style="display:inline-block;transform:scaleX(0.88);transform-origin:50% 50%">B</span></div>
<div class="btn" style="left:989px;top:690px;width:27px;height:24px;font-size:12px;line-height:23px;color:#000;"><span style="display:inline-block;transform:scaleX(0.88);transform-origin:50% 50%">C</span></div>
<div style="position:absolute;left:934px;top:713px;width:25px;height:4px;background:#a8ccee"></div>
<div style="position:absolute;left:962px;top:713px;width:25px;height:4px;background:#ffff00"></div>
<div style="position:absolute;left:989px;top:713px;width:27px;height:4px;background:#ff00ff"></div>
<div style="position:absolute;left:11px;top:723px;width:1025px;height:2px;border-top:1px solid #a0a0a0;border-bottom:1px solid #fff"></div>
<div class="t" style="left:139px;top:743px;font-size:12px;line-height:12px;color:#000;font-weight:bold;">Timing process indicator</div>
<div style="position:absolute;left:19px;top:759px;width:81px;height:19px;background:#0ff;border:1px solid;border-color:#808080 #f0f0f0 #f0f0f0 #808080;box-shadow:inset 1px 1px 0 #a0a0a0"></div>
<div class="t" style="left:21px;top:762px;font-size:12px;line-height:12px;color:#000;overflow:hidden;width:78px"><span style="display:inline-block;transform:scaleX(0.92);transform-origin:0 50%">1. Time correct</span></div>
<div style="position:absolute;left:100px;top:759px;width:87px;height:19px;background:#0ff;border:1px solid;border-color:#808080 #f0f0f0 #f0f0f0 #808080;box-shadow:inset 1px 1px 0 #a0a0a0"></div>
<div class="t" style="left:102px;top:762px;font-size:12px;line-height:12px;color:#000;overflow:hidden;width:84px"><span style="display:inline-block;transform:scaleX(0.92);transform-origin:0 50%">2. XML element</span></div>
<div style="position:absolute;left:188px;top:759px;width:71px;height:19px;background:#0ff;border:1px solid;border-color:#808080 #f0f0f0 #f0f0f0 #808080;box-shadow:inset 1px 1px 0 #a0a0a0"></div>
<div class="t" style="left:190px;top:762px;font-size:12px;line-height:12px;color:#000;overflow:hidden;width:68px"><span style="display:inline-block;transform:scaleX(0.92);transform-origin:0 50%">3. Light curve</span></div>
<div style="position:absolute;left:260px;top:759px;width:80px;height:19px;background:#0ff;border:1px solid;border-color:#808080 #f0f0f0 #f0f0f0 #808080;box-shadow:inset 1px 1px 0 #a0a0a0"></div>
<div class="t" style="left:262px;top:762px;font-size:12px;line-height:12px;color:#000;overflow:hidden;width:77px"><span style="display:inline-block;transform:scaleX(0.92);transform-origin:0 50%">4. Diffraction tit</span></div>
<div style="position:absolute;left:340px;top:759px;width:79px;height:19px;background:#fff;border:1px solid;border-color:#808080 #f0f0f0 #f0f0f0 #808080;box-shadow:inset 1px 1px 0 #a0a0a0"></div>
<div class="t" style="left:342px;top:762px;font-size:12px;line-height:12px;color:#000;overflow:hidden;width:76px"><span style="display:inline-block;transform:scaleX(0.92);transform-origin:0 50%">5. Make report</span></div>
<div class="t" style="left:435px;top:731px;font-size:14px;line-height:14px;color:#000;font-weight:bold;">AVI filename :</div>
<div class="ed" style="left:531px;top:729px;width:496px;height:18px;font-size:12px;line-height:16px;color:#000;padding-left:2px;font-family:'Liberation Mono',monospace;font-size:11.5px;letter-spacing:0.35px">I:¥A-えんぺい観測¥観測記録2025¥20250507◎Frienden自宅¥02_02_00.avi</div>
<div class="t" style="left:531px;top:759px;font-size:13px;line-height:13px;color:#000;">SharpCap version:</div>
<div class="ed" style="left:651px;top:755px;width:104px;height:19px;font-size:12px;line-height:17px;color:#000;padding-left:4px;font-weight:bold;">4. 0. 9571. 0</div>
<div class="t" style="left:771px;top:760px;font-size:13px;line-height:13px;color:#000;">Time stamp indicates</div>
<div class="ed" style="left:907px;top:755px;width:112px;height:19px;font-size:12px;line-height:17px;color:#000;padding-left:3px;font-weight:bold;">FrameEnd</div>
<svg style="position:absolute;left:0;top:0" width="1809" height="789" viewBox="0 0 1809 789"><rect x="1047" y="37" width="740" height="425" fill="#fff"/><line x1="1098" y1="372.5" x2="1777" y2="372.5" stroke="#00e5ee" stroke-width="1.3"/><line x1="1098" y1="324.5" x2="1777" y2="324.5" stroke="#00e5ee" stroke-width="1.3"/><line x1="1098" y1="276.5" x2="1777" y2="276.5" stroke="#00e5ee" stroke-width="1.3"/><line x1="1098" y1="228.5" x2="1777" y2="228.5" stroke="#00e5ee" stroke-width="1.3"/><line x1="1098" y1="180.5" x2="1777" y2="180.5" stroke="#00e5ee" stroke-width="1.3"/><line x1="1098" y1="132.5" x2="1777" y2="132.5" stroke="#00e5ee" stroke-width="1.3"/><line x1="1098" y1="84.5" x2="1777" y2="84.5" stroke="#00e5ee" stroke-width="1.3"/><line x1="1097.5" y1="57" x2="1097.5" y2="423" stroke="#000" stroke-width="1.5"/><line x1="1097" y1="422.5" x2="1777" y2="422.5" stroke="#000" stroke-width="1.5"/><line x1="1121.5" y1="422" x2="1121.5" y2="427" stroke="#000" stroke-width="1"/><line x1="1161.5" y1="422" x2="1161.5" y2="427" stroke="#000" stroke-width="1"/><line x1="1201.5" y1="422" x2="1201.5" y2="427" stroke="#000" stroke-width="1"/><line x1="1241.5" y1="422" x2="1241.5" y2="427" stroke="#000" stroke-width="1"/><line x1="1281.5" y1="422" x2="1281.5" y2="427" stroke="#000" stroke-width="1"/><line x1="1321.5" y1="422" x2="1321.5" y2="427" stroke="#000" stroke-width="1"/><line x1="1361.5" y1="422" x2="1361.5" y2="427" stroke="#000" stroke-width="1"/><line x1="1401.5" y1="422" x2="1401.5" y2="427" stroke="#000" stroke-width="1"/><line x1="1441.5" y1="422" x2="1441.5" y2="427" stroke="#000" stroke-width="1"/><line x1="1481.5" y1="422" x2="1481.5" y2="427" stroke="#000" stroke-width="1"/><line x1="1521.5" y1="422" x2="1521.5" y2="427" stroke="#000" stroke-width="1"/><line x1="1561.5" y1="422" x2="1561.5" y2="427" stroke="#000" stroke-width="1"/><line x1="1601.5" y1="422" x2="1601.5" y2="427" stroke="#000" stroke-width="1"/><line x1="1641.5" y1="422" x2="1641.5" y2="427" stroke="#000" stroke-width="1"/><line x1="1681.5" y1="422" x2="1681.5" y2="427" stroke="#000" stroke-width="1"/><line x1="1721.5" y1="422" x2="1721.5" y2="427" stroke="#000" stroke-width="1"/><line x1="1761.5" y1="422" x2="1761.5" y2="427" stroke="#000" stroke-width="1"/><polyline points="1097.3,118.7 1101.3,113.9 1105.3,126.8 1109.3,118.9 1113.3,128.8 1117.3,94.9 1121.3,121.9 1125.3,118.9 1129.3,102.0 1133.3,99.0 1137.3,120.1 1141.3,102.0 1145.3,141.9 1149.3,111.9 1153.3,132.0 1157.3,121.0 1161.3,94.9 1165.3,89.9 1169.3,117.8 1173.3,115.0 1177.3,116.9 1181.3,111.9 1185.3,100.0 1189.3,108.9 1193.3,156.8 1197.3,148.8 1201.3,94.9 1205.3,137.0 1209.3,154.9 1213.3,100.0 1217.3,108.9 1221.3,105.0 1225.3,105.0 1229.3,56.7 1233.3,118.9 1237.3,108.9 1241.3,100.0 1245.3,108.9 1249.3,108.9 1253.3,108.9 1257.3,121.0 1261.3,132.9 1265.3,144.9 1269.3,118.9 1273.3,123.8 1277.3,85.8 1281.3,105.0 1285.3,129.9 1289.3,113.9 1293.3,123.8 1297.3,137.8 1301.3,116.9 1305.3,137.8 1309.3,132.0 1313.3,108.9 1317.3,167.8 1321.3,119.9 1325.3,142.8 1329.3,116.9 1333.3,137.8 1337.3,113.9 1341.3,100.0 1345.3,124.9 1349.3,113.9 1353.3,113.9 1357.3,113.9 1361.3,137.0 1365.3,121.0 1369.3,143.9 1373.3,110.9 1377.3,177.8 1381.3,101.1 1385.3,103.9 1389.3,94.9 1393.3,108.9 1397.3,140.0 1401.3,129.0 1405.3,130.9 1409.3,118.9 1413.3,121.9 1417.3,99.0 1421.3,105.0 1425.3,117.8 1429.3,85.8 1433.3,113.9 1437.3,108.9 1441.3,113.9 1445.3,105.0 1449.3,94.9 1453.3,129.0 1457.3,108.9 1461.3,94.9 1465.3,100.0 1469.3,141.0 1473.3,141.9 1477.3,108.9 1481.3,121.0 1485.3,123.8 1489.3,105.0 1493.3,126.0 1497.3,108.9 1501.3,115.0 1505.3,96.9 1509.3,121.0 1513.3,108.9 1517.3,123.8 1521.3,133.9 1525.3,99.0 1529.3,106.8 1533.3,133.9 1537.3,94.9 1541.3,144.9 1545.3,116.9 1549.3,100.0 1553.3,85.8 1557.3,94.9 1561.3,108.9 1565.3,132.9 1569.3,121.9 1573.3,105.0 1577.3,89.9 1581.3,129.0 1585.3,113.9 1589.3,108.9 1593.3,118.9 1597.3,100.0 1601.3,119.9 1605.3,145.8 1609.3,122.8 1613.3,100.0 1617.3,126.8 1621.3,94.9 1625.3,105.0 1629.3,89.9 1633.3,100.0 1637.3,94.9 1641.3,108.9 1645.3,75.9 1649.3,89.9 1653.3,116.0 1657.3,100.0 1661.3,100.0 1665.3,127.7 1669.3,108.9 1673.3,89.9 1677.3,132.9 1681.3,113.9 1685.3,117.8 1689.3,123.8 1693.3,102.9 1697.3,118.9 1701.3,108.9 1705.3,105.0 1709.3,94.9 1713.3,117.8 1717.3,118.9 1721.3,122.8 1725.3,108.9 1729.3,118.9 1733.3,94.9 1737.3,105.9 1741.3,110.0 1745.3,100.0 1749.3,144.9 1753.3,108.9 1757.3,111.9 1761.3,108.9 1765.3,118.9 1769.3,123.8 1773.3,100.0" fill="none" stroke="#ffff00" stroke-width="1.2"/><polyline points="1097.3,261.9 1101.3,272.9 1105.3,276.7 1109.3,265.8 1113.3,246.0 1117.3,282.9 1121.3,230.7 1125.3,304.8 1129.3,282.0 1133.3,250.7 1137.3,252.8 1141.3,297.7 1145.3,291.8 1149.3,276.1 1153.3,279.7 1157.3,293.9 1161.3,278.8 1165.3,295.9 1169.3,266.9 1173.3,293.9 1177.3,278.8 1181.3,259.0 1185.3,276.7 1189.3,285.0 1193.3,299.1 1197.3,265.8 1201.3,287.0 1205.3,289.7 1209.3,285.9 1213.3,247.1 1217.3,249.8 1221.3,285.0 1225.3,269.0 1229.3,261.0 1233.3,287.9 1237.3,278.8 1241.3,269.9 1245.3,294.8 1249.3,303.7 1253.3,261.9 1257.3,266.9 1261.3,263.1 1265.3,277.7 1269.3,285.9 1273.3,278.8 1277.3,246.6 1281.3,256.9 1285.3,253.9 1289.3,287.9 1293.3,261.9 1297.3,293.9 1301.3,256.9 1305.3,282.9 1309.3,259.9 1313.3,276.7 1317.3,290.9 1321.3,303.0 1325.3,248.9 1329.3,298.9 1333.3,301.8 1337.3,246.6 1341.3,274.0 1345.3,280.9 1349.3,271.7 1353.3,238.0 1357.3,252.8 1361.3,325.1 1365.3,257.8 1369.3,295.7 1373.3,256.9 1377.3,259.9 1381.3,278.8 1385.3,263.1 1389.3,313.9 1393.3,261.0 1397.3,266.9 1401.3,271.7 1405.3,257.8 1409.3,231.8 1413.3,264.0 1417.3,259.9 1421.3,269.9 1425.3,293.9 1429.3,251.9 1433.3,247.8 1437.3,382.8 1441.3,377.1 1445.3,377.1 1449.3,384.0 1453.3,397.0 1457.3,365.0 1461.3,368.7 1465.3,378.9 1469.3,304.8 1473.3,298.9 1477.3,311.9 1481.3,253.9 1485.3,285.0 1489.3,259.9 1493.3,305.9 1497.3,283.8 1501.3,290.9 1505.3,341.8 1509.3,265.8 1513.3,271.7 1517.3,261.9 1521.3,280.9 1525.3,259.9 1529.3,285.9 1533.3,274.9 1537.3,287.9 1541.3,257.8 1545.3,264.9 1549.3,278.8 1553.3,249.8 1557.3,276.7 1561.3,259.0 1565.3,267.8 1569.3,240.9 1573.3,267.8 1577.3,289.7 1581.3,297.7 1585.3,295.9 1589.3,320.8 1593.3,264.9 1597.3,246.6 1601.3,259.9 1605.3,276.7 1609.3,278.8 1613.3,276.7 1617.3,265.8 1621.3,269.0 1625.3,250.7 1629.3,277.7 1633.3,292.7 1637.3,266.9 1641.3,259.0 1645.3,235.9 1649.3,274.0 1653.3,282.9 1657.3,238.0 1661.3,277.7 1665.3,281.8 1669.3,278.8 1673.3,267.8 1677.3,272.9 1681.3,246.0 1685.3,264.9 1689.3,316.9 1693.3,269.9 1697.3,263.1 1701.3,270.8 1705.3,280.9 1709.3,298.9 1713.3,269.9 1717.3,261.9 1721.3,264.0 1725.3,247.8 1729.3,279.7 1733.3,253.9 1737.3,261.9 1741.3,266.9 1745.3,259.0 1749.3,287.9 1753.3,236.8 1757.3,291.8 1761.3,266.9 1765.3,264.9 1769.3,276.7 1773.3,311.9" fill="none" stroke="#8c8cff" stroke-width="1.1"/><polyline points="1097.3,421.0 1101.3,419.5 1105.3,417.5 1109.3,419.5 1113.3,419.5 1117.3,419.5 1121.3,421.0 1125.3,419.5 1129.3,418.0 1133.3,419.5 1137.3,419.5 1141.3,417.5 1145.3,417.5 1149.3,419.5 1153.3,418.0 1157.3,419.5 1161.3,417.5 1165.3,419.5 1169.3,419.5 1173.3,418.0 1177.3,419.5 1181.3,417.5 1185.3,419.5 1189.3,418.0 1193.3,419.5 1197.3,419.5 1201.3,420.5 1205.3,417.5 1209.3,419.5 1213.3,419.5 1217.3,420.5 1221.3,419.5 1225.3,419.5 1229.3,418.0 1233.3,421.0 1237.3,419.5 1241.3,419.5 1245.3,419.5 1249.3,418.0 1253.3,420.0 1257.3,417.5 1261.3,421.0 1265.3,420.0 1269.3,420.0 1273.3,421.0 1277.3,420.5 1281.3,418.0 1285.3,419.5 1289.3,418.0 1293.3,419.5 1297.3,420.5 1301.3,420.0 1305.3,421.0 1309.3,420.0 1313.3,420.5 1317.3,419.5 1321.3,419.5 1325.3,417.5 1329.3,419.5 1333.3,421.0 1337.3,419.5 1341.3,420.0 1345.3,417.5 1349.3,419.5 1353.3,419.5 1357.3,421.0 1361.3,421.0 1365.3,421.0 1369.3,420.0 1373.3,420.0 1377.3,419.5 1381.3,419.5 1385.3,420.5 1389.3,420.0 1393.3,419.5 1397.3,419.5 1401.3,420.5 1405.3,420.0 1409.3,420.5 1413.3,417.5 1417.3,421.0 1421.3,419.5 1425.3,419.0 1429.3,420.5 1433.3,419.5 1437.3,419.5 1441.3,419.0 1445.3,419.5 1449.3,419.5 1453.3,418.5 1457.3,419.5 1461.3,419.5 1465.3,420.0 1469.3,420.0 1473.3,419.0 1477.3,419.5 1481.3,419.5 1485.3,419.0 1489.3,420.0 1493.3,418.5 1497.3,419.5 1501.3,420.0 1505.3,418.5 1509.3,420.0 1513.3,420.5 1517.3,420.0 1521.3,419.5 1525.3,419.5 1529.3,419.5 1533.3,419.5 1537.3,419.5 1541.3,419.5 1545.3,419.5 1549.3,419.5 1553.3,419.0 1557.3,419.5 1561.3,418.5 1565.3,418.5 1569.3,419.5 1573.3,419.5 1577.3,420.0 1581.3,420.5 1585.3,420.5 1589.3,419.5 1593.3,419.5 1597.3,419.0 1601.3,420.0 1605.3,420.0 1609.3,420.0 1613.3,420.0 1617.3,419.5 1621.3,419.0 1625.3,420.0 1629.3,419.5 1633.3,419.5 1637.3,419.5 1641.3,419.5 1645.3,419.0 1649.3,419.5 1653.3,419.5 1657.3,421.0 1661.3,419.5 1665.3,419.5 1669.3,419.5 1673.3,419.5 1677.3,419.5 1681.3,421.0 1685.3,419.5 1689.3,419.5 1693.3,418.0 1697.3,417.5 1701.3,419.5 1705.3,420.5 1709.3,421.0 1713.3,421.0 1717.3,420.0 1721.3,419.5 1725.3,419.5 1729.3,420.0 1733.3,420.0 1737.3,420.0 1741.3,420.0 1745.3,420.5 1749.3,419.5 1753.3,419.5 1757.3,419.5 1761.3,421.0 1765.3,420.5 1769.3,420.0 1773.3,419.5" fill="none" stroke="#ff40ff" stroke-width="1"/><circle cx="1097.3" cy="118.7" r="2.2" fill="#ff9e00"/><circle cx="1101.3" cy="113.9" r="2.2" fill="#ff9e00"/><circle cx="1105.3" cy="126.8" r="2.2" fill="#ff9e00"/><circle cx="1109.3" cy="118.9" r="2.2" fill="#ff9e00"/><circle cx="1113.3" cy="128.8" r="2.2" fill="#ff9e00"/><circle cx="1117.3" cy="94.9" r="2.2" fill="#ff9e00"/><circle cx="1121.3" cy="121.9" r="2.2" fill="#ff9e00"/><circle cx="1125.3" cy="118.9" r="2.2" fill="#ff9e00"/><circle cx="1129.3" cy="102.0" r="2.2" fill="#ff9e00"/><circle cx="1133.3" cy="99.0" r="2.2" fill="#ff9e00"/><circle cx="1137.3" cy="120.1" r="2.2" fill="#ff9e00"/><circle cx="1141.3" cy="102.0" r="2.2" fill="#ff9e00"/><circle cx="1145.3" cy="141.9" r="2.2" fill="#ff9e00"/><circle cx="1149.3" cy="111.9" r="2.2" fill="#ff9e00"/><circle cx="1153.3" cy="132.0" r="2.2" fill="#ff9e00"/><circle cx="1157.3" cy="121.0" r="2.2" fill="#ff9e00"/><circle cx="1161.3" cy="94.9" r="2.2" fill="#ff9e00"/><circle cx="1165.3" cy="89.9" r="2.2" fill="#ff9e00"/><circle cx="1169.3" cy="117.8" r="2.2" fill="#ff9e00"/><circle cx="1173.3" cy="115.0" r="2.2" fill="#ff9e00"/><circle cx="1177.3" cy="116.9" r="2.2" fill="#ff9e00"/><circle cx="1181.3" cy="111.9" r="2.2" fill="#ff9e00"/><circle cx="1185.3" cy="100.0" r="2.2" fill="#ff9e00"/><circle cx="1189.3" cy="108.9" r="2.2" fill="#ff9e00"/><circle cx="1193.3" cy="156.8" r="2.2" fill="#ff9e00"/><circle cx="1197.3" cy="148.8" r="2.2" fill="#ff9e00"/><circle cx="1201.3" cy="94.9" r="2.2" fill="#ff9e00"/><circle cx="1205.3" cy="137.0" r="2.2" fill="#ff9e00"/><circle cx="1209.3" cy="154.9" r="2.2" fill="#ff9e00"/><circle cx="1213.3" cy="100.0" r="2.2" fill="#ff9e00"/><circle cx="1217.3" cy="108.9" r="2.2" fill="#ff9e00"/><circle cx="1221.3" cy="105.0" r="2.2" fill="#ff9e00"/><circle cx="1225.3" cy="105.0" r="2.2" fill="#ff9e00"/><circle cx="1229.3" cy="56.7" r="2.2" fill="#ff9e00"/><circle cx="1233.3" cy="118.9" r="2.2" fill="#ff9e00"/><circle cx="1237.3" cy="108.9" r="2.2" fill="#ff9e00"/><circle cx="1241.3" cy="100.0" r="2.2" fill="#ff9e00"/><circle cx="1245.3" cy="108.9" r="2.2" fill="#ff9e00"/><circle cx="1249.3" cy="108.9" r="2.2" fill="#ff9e00"/><circle cx="1253.3" cy="108.9" r="2.2" fill="#ff9e00"/><circle cx="1257.3" cy="121.0" r="2.2" fill="#ff9e00"/><circle cx="1261.3" cy="132.9" r="2.2" fill="#ff9e00"/><circle cx="1265.3" cy="144.9" r="2.2" fill="#ff9e00"/><circle cx="1269.3" cy="118.9" r="2.2" fill="#ff9e00"/><circle cx="1273.3" cy="123.8" r="2.2" fill="#ff9e00"/><circle cx="1277.3" cy="85.8" r="2.2" fill="#ff9e00"/><circle cx="1281.3" cy="105.0" r="2.2" fill="#ff9e00"/><circle cx="1285.3" cy="129.9" r="2.2" fill="#ff9e00"/><circle cx="1289.3" cy="113.9" r="2.2" fill="#ff9e00"/><circle cx="1293.3" cy="123.8" r="2.2" fill="#ff9e00"/><circle cx="1297.3" cy="137.8" r="2.2" fill="#ff9e00"/><circle cx="1301.3" cy="116.9" r="2.2" fill="#ff9e00"/><circle cx="1305.3" cy="137.8" r="2.2" fill="#ff9e00"/><circle cx="1309.3" cy="132.0" r="2.2" fill="#ff9e00"/><circle cx="1313.3" cy="108.9" r="2.2" fill="#ff9e00"/><circle cx="1317.3" cy="167.8" r="2.2" fill="#ff9e00"/><circle cx="1321.3" cy="119.9" r="2.2" fill="#ff9e00"/><circle cx="1325.3" cy="142.8" r="2.2" fill="#ff9e00"/><circle cx="1329.3" cy="116.9" r="2.2" fill="#ff9e00"/><circle cx="1333.3" cy="137.8" r="2.2" fill="#ff9e00"/><circle cx="1337.3" cy="113.9" r="2.2" fill="#ff9e00"/><circle cx="1341.3" cy="100.0" r="2.2" fill="#ff9e00"/><circle cx="1345.3" cy="124.9" r="2.2" fill="#ff9e00"/><circle cx="1349.3" cy="113.9" r="2.2" fill="#ff9e00"/><circle cx="1353.3" cy="113.9" r="2.2" fill="#ff9e00"/><circle cx="1357.3" cy="113.9" r="2.2" fill="#ff9e00"/><circle cx="1361.3" cy="137.0" r="2.2" fill="#ff9e00"/><circle cx="1365.3" cy="121.0" r="2.2" fill="#ff9e00"/><circle cx="1369.3" cy="143.9" r="2.2" fill="#ff9e00"/><circle cx="1373.3" cy="110.9" r="2.2" fill="#ff9e00"/><circle cx="1377.3" cy="177.8" r="2.2" fill="#ff9e00"/><circle cx="1381.3" cy="101.1" r="2.2" fill="#ff9e00"/><circle cx="1385.3" cy="103.9" r="2.2" fill="#ff9e00"/><circle cx="1389.3" cy="94.9" r="2.2" fill="#ff9e00"/><circle cx="1393.3" cy="108.9" r="2.2" fill="#ff9e00"/><circle cx="1397.3" cy="140.0" r="2.2" fill="#ff9e00"/><circle cx="1401.3" cy="129.0" r="2.2" fill="#ff9e00"/><circle cx="1405.3" cy="130.9" r="2.2" fill="#ff9e00"/><circle cx="1409.3" cy="118.9" r="2.2" fill="#ff9e00"/><circle cx="1413.3" cy="121.9" r="2.2" fill="#ff9e00"/><circle cx="1417.3" cy="99.0" r="2.2" fill="#ff9e00"/><circle cx="1421.3" cy="105.0" r="2.2" fill="#ff9e00"/><circle cx="1425.3" cy="117.8" r="2" fill="#fff" stroke="#f09000" stroke-width="1"/><circle cx="1429.3" cy="85.8" r="2" fill="#fff" stroke="#f09000" stroke-width="1"/><circle cx="1433.3" cy="113.9" r="2" fill="#fff" stroke="#f09000" stroke-width="1"/><circle cx="1437.3" cy="108.9" r="2" fill="#fff" stroke="#f09000" stroke-width="1"/><circle cx="1441.3" cy="113.9" r="2" fill="#fff" stroke="#f09000" stroke-width="1"/><circle cx="1445.3" cy="105.0" r="2" fill="#fff" stroke="#f09000" stroke-width="1"/><circle cx="1449.3" cy="94.9" r="2" fill="#fff" stroke="#f09000" stroke-width="1"/><path d="M1453.3 125.5 L1456.8 129.0 L1453.3 132.5 L1449.8 129.0Z" fill="#ff0000"/><circle cx="1457.3" cy="108.9" r="2" fill="#fff" stroke="#f09000" stroke-width="1"/><circle cx="1461.3" cy="94.9" r="2" fill="#fff" stroke="#f09000" stroke-width="1"/><circle cx="1465.3" cy="100.0" r="2" fill="#fff" stroke="#f09000" stroke-width="1"/><circle cx="1469.3" cy="141.0" r="2" fill="#fff" stroke="#f09000" stroke-width="1"/><circle cx="1473.3" cy="141.9" r="2" fill="#fff" stroke="#f09000" stroke-width="1"/><circle cx="1477.3" cy="108.9" r="2" fill="#fff" stroke="#f09000" stroke-width="1"/><circle cx="1481.3" cy="121.0" r="2" fill="#fff" stroke="#f09000" stroke-width="1"/><circle cx="1485.3" cy="123.8" r="2" fill="#fff" stroke="#f09000" stroke-width="1"/><circle cx="1489.3" cy="105.0" r="2" fill="#fff" stroke="#f09000" stroke-width="1"/><circle cx="1493.3" cy="126.0" r="2" fill="#fff" stroke="#f09000" stroke-width="1"/><circle cx="1497.3" cy="108.9" r="2" fill="#fff" stroke="#f09000" stroke-width="1"/><circle cx="1501.3" cy="115.0" r="2" fill="#fff" stroke="#f09000" stroke-width="1"/><circle cx="1505.3" cy="96.9" r="2" fill="#fff" stroke="#f09000" stroke-width="1"/><circle cx="1509.3" cy="121.0" r="2" fill="#fff" stroke="#f09000" stroke-width="1"/><circle cx="1513.3" cy="108.9" r="2" fill="#fff" stroke="#f09000" stroke-width="1"/><circle cx="1517.3" cy="123.8" r="2" fill="#fff" stroke="#f09000" stroke-width="1"/><circle cx="1521.3" cy="133.9" r="2" fill="#fff" stroke="#f09000" stroke-width="1"/><circle cx="1525.3" cy="99.0" r="2" fill="#fff" stroke="#f09000" stroke-width="1"/><circle cx="1529.3" cy="106.8" r="2" fill="#fff" stroke="#f09000" stroke-width="1"/><circle cx="1533.3" cy="133.9" r="2" fill="#fff" stroke="#f09000" stroke-width="1"/><circle cx="1537.3" cy="94.9" r="2" fill="#fff" stroke="#f09000" stroke-width="1"/><circle cx="1541.3" cy="144.9" r="2" fill="#fff" stroke="#f09000" stroke-width="1"/><circle cx="1545.3" cy="116.9" r="2" fill="#fff" stroke="#f09000" stroke-width="1"/><circle cx="1549.3" cy="100.0" r="2" fill="#fff" stroke="#f09000" stroke-width="1"/><circle cx="1553.3" cy="85.8" r="2" fill="#fff" stroke="#f09000" stroke-width="1"/><circle cx="1557.3" cy="94.9" r="2" fill="#fff" stroke="#f09000" stroke-width="1"/><circle cx="1561.3" cy="108.9" r="2" fill="#fff" stroke="#f09000" stroke-width="1"/><circle cx="1565.3" cy="132.9" r="2" fill="#fff" stroke="#f09000" stroke-width="1"/><circle cx="1569.3" cy="121.9" r="2" fill="#fff" stroke="#f09000" stroke-width="1"/><circle cx="1573.3" cy="105.0" r="2" fill="#fff" stroke="#f09000" stroke-width="1"/><circle cx="1577.3" cy="89.9" r="2" fill="#fff" stroke="#f09000" stroke-width="1"/><circle cx="1581.3" cy="129.0" r="2" fill="#fff" stroke="#f09000" stroke-width="1"/><circle cx="1585.3" cy="113.9" r="2" fill="#fff" stroke="#f09000" stroke-width="1"/><circle cx="1589.3" cy="108.9" r="2" fill="#fff" stroke="#f09000" stroke-width="1"/><circle cx="1593.3" cy="118.9" r="2" fill="#fff" stroke="#f09000" stroke-width="1"/><circle cx="1597.3" cy="100.0" r="2" fill="#fff" stroke="#f09000" stroke-width="1"/><circle cx="1601.3" cy="119.9" r="2" fill="#fff" stroke="#f09000" stroke-width="1"/><circle cx="1605.3" cy="145.8" r="2" fill="#fff" stroke="#f09000" stroke-width="1"/><circle cx="1609.3" cy="122.8" r="2" fill="#fff" stroke="#f09000" stroke-width="1"/><circle cx="1613.3" cy="100.0" r="2" fill="#fff" stroke="#f09000" stroke-width="1"/><circle cx="1617.3" cy="126.8" r="2" fill="#fff" stroke="#f09000" stroke-width="1"/><circle cx="1621.3" cy="94.9" r="2" fill="#fff" stroke="#f09000" stroke-width="1"/><circle cx="1625.3" cy="105.0" r="2" fill="#fff" stroke="#f09000" stroke-width="1"/><circle cx="1629.3" cy="89.9" r="2" fill="#fff" stroke="#f09000" stroke-width="1"/><circle cx="1633.3" cy="100.0" r="2" fill="#fff" stroke="#f09000" stroke-width="1"/><circle cx="1637.3" cy="94.9" r="2" fill="#fff" stroke="#f09000" stroke-width="1"/><circle cx="1641.3" cy="108.9" r="2" fill="#fff" stroke="#f09000" stroke-width="1"/><circle cx="1645.3" cy="75.9" r="2" fill="#fff" stroke="#f09000" stroke-width="1"/><circle cx="1649.3" cy="89.9" r="2" fill="#fff" stroke="#f09000" stroke-width="1"/><circle cx="1653.3" cy="116.0" r="2.2" fill="#ff9e00"/><circle cx="1657.3" cy="100.0" r="2.2" fill="#ff9e00"/><circle cx="1661.3" cy="100.0" r="2.2" fill="#ff9e00"/><circle cx="1665.3" cy="127.7" r="2.2" fill="#ff9e00"/><circle cx="1669.3" cy="108.9" r="2.2" fill="#ff9e00"/><circle cx="1673.3" cy="89.9" r="2.2" fill="#ff9e00"/><circle cx="1677.3" cy="132.9" r="2.2" fill="#ff9e00"/><circle cx="1681.3" cy="113.9" r="2.2" fill="#ff9e00"/><circle cx="1685.3" cy="117.8" r="2.2" fill="#ff9e00"/><circle cx="1689.3" cy="123.8" r="2.2" fill="#ff9e00"/><circle cx="1693.3" cy="102.9" r="2.2" fill="#ff9e00"/><circle cx="1697.3" cy="118.9" r="2.2" fill="#ff9e00"/><circle cx="1701.3" cy="108.9" r="2.2" fill="#ff9e00"/><circle cx="1705.3" cy="105.0" r="2.2" fill="#ff9e00"/><circle cx="1709.3" cy="94.9" r="2.2" fill="#ff9e00"/><circle cx="1713.3" cy="117.8" r="2.2" fill="#ff9e00"/><circle cx="1717.3" cy="118.9" r="2.2" fill="#ff9e00"/><circle cx="1721.3" cy="122.8" r="2.2" fill="#ff9e00"/><circle cx="1725.3" cy="108.9" r="2.2" fill="#ff9e00"/><circle cx="1729.3" cy="118.9" r="2.2" fill="#ff9e00"/><circle cx="1733.3" cy="94.9" r="2.2" fill="#ff9e00"/><circle cx="1737.3" cy="105.9" r="2.2" fill="#ff9e00"/><circle cx="1741.3" cy="110.0" r="2.2" fill="#ff9e00"/><circle cx="1745.3" cy="100.0" r="2.2" fill="#ff9e00"/><circle cx="1749.3" cy="144.9" r="2.2" fill="#ff9e00"/><circle cx="1753.3" cy="108.9" r="2.2" fill="#ff9e00"/><circle cx="1757.3" cy="111.9" r="2.2" fill="#ff9e00"/><circle cx="1761.3" cy="108.9" r="2.2" fill="#ff9e00"/><circle cx="1765.3" cy="118.9" r="2.2" fill="#ff9e00"/><circle cx="1769.3" cy="123.8" r="2.2" fill="#ff9e00"/><circle cx="1773.3" cy="100.0" r="2.2" fill="#ff9e00"/><circle cx="1097.3" cy="261.9" r="2.2" fill="#0000ff"/><circle cx="1101.3" cy="272.9" r="2.2" fill="#0000ff"/><circle cx="1105.3" cy="276.7" r="2.2" fill="#0000ff"/><circle cx="1109.3" cy="265.8" r="2.2" fill="#0000ff"/><circle cx="1113.3" cy="246.0" r="2.2" fill="#0000ff"/><circle cx="1117.3" cy="282.9" r="2.2" fill="#0000ff"/><circle cx="1121.3" cy="230.7" r="2.2" fill="#0000ff"/><circle cx="1125.3" cy="304.8" r="2.2" fill="#0000ff"/><circle cx="1129.3" cy="282.0" r="2.2" fill="#0000ff"/><circle cx="1133.3" cy="250.7" r="2.2" fill="#0000ff"/><circle cx="1137.3" cy="252.8" r="2.2" fill="#0000ff"/><circle cx="1141.3" cy="297.7" r="2.2" fill="#0000ff"/><circle cx="1145.3" cy="291.8" r="2.2" fill="#0000ff"/><circle cx="1149.3" cy="276.1" r="2.2" fill="#0000ff"/><circle cx="1153.3" cy="279.7" r="2.2" fill="#0000ff"/><circle cx="1157.3" cy="293.9" r="2.2" fill="#0000ff"/><circle cx="1161.3" cy="278.8" r="2.2" fill="#0000ff"/><circle cx="1165.3" cy="295.9" r="2.2" fill="#0000ff"/><circle cx="1169.3" cy="266.9" r="2.2" fill="#0000ff"/><circle cx="1173.3" cy="293.9" r="2.2" fill="#0000ff"/><circle cx="1177.3" cy="278.8" r="2.2" fill="#0000ff"/><circle cx="1181.3" cy="259.0" r="2.2" fill="#0000ff"/><circle cx="1185.3" cy="276.7" r="2.2" fill="#0000ff"/><circle cx="1189.3" cy="285.0" r="2.2" fill="#0000ff"/><circle cx="1193.3" cy="299.1" r="2.2" fill="#0000ff"/><circle cx="1197.3" cy="265.8" r="2.2" fill="#0000ff"/><circle cx="1201.3" cy="287.0" r="2.2" fill="#0000ff"/><circle cx="1205.3" cy="289.7" r="2.2" fill="#0000ff"/><circle cx="1209.3" cy="285.9" r="2.2" fill="#0000ff"/><circle cx="1213.3" cy="247.1" r="2.2" fill="#0000ff"/><circle cx="1217.3" cy="249.8" r="2.2" fill="#0000ff"/><circle cx="1221.3" cy="285.0" r="2.2" fill="#0000ff"/><circle cx="1225.3" cy="269.0" r="2.2" fill="#0000ff"/><circle cx="1229.3" cy="261.0" r="2.2" fill="#0000ff"/><circle cx="1233.3" cy="287.9" r="2.2" fill="#0000ff"/><circle cx="1237.3" cy="278.8" r="2.2" fill="#0000ff"/><circle cx="1241.3" cy="269.9" r="2.2" fill="#0000ff"/><circle cx="1245.3" cy="294.8" r="2.2" fill="#0000ff"/><circle cx="1249.3" cy="303.7" r="2.2" fill="#0000ff"/><circle cx="1253.3" cy="261.9" r="2.2" fill="#0000ff"/><circle cx="1257.3" cy="266.9" r="2.2" fill="#0000ff"/><circle cx="1261.3" cy="263.1" r="2.2" fill="#0000ff"/><circle cx="1265.3" cy="277.7" r="2.2" fill="#0000ff"/><circle cx="1269.3" cy="285.9" r="2.2" fill="#0000ff"/><circle cx="1273.3" cy="278.8" r="2.2" fill="#0000ff"/><circle cx="1277.3" cy="246.6" r="2.2" fill="#0000ff"/><circle cx="1281.3" cy="256.9" r="2.2" fill="#0000ff"/><circle cx="1285.3" cy="253.9" r="2.2" fill="#0000ff"/><circle cx="1289.3" cy="287.9" r="2.2" fill="#0000ff"/><circle cx="1293.3" cy="261.9" r="2.2" fill="#0000ff"/><circle cx="1297.3" cy="293.9" r="2.2" fill="#0000ff"/><circle cx="1301.3" cy="256.9" r="2.2" fill="#0000ff"/><circle cx="1305.3" cy="282.9" r="2.2" fill="#0000ff"/><circle cx="1309.3" cy="259.9" r="2.2" fill="#0000ff"/><circle cx="1313.3" cy="276.7" r="2.2" fill="#0000ff"/><circle cx="1317.3" cy="290.9" r="2.2" fill="#0000ff"/><circle cx="1321.3" cy="303.0" r="2.2" fill="#0000ff"/><circle cx="1325.3" cy="248.9" r="2.2" fill="#0000ff"/><circle cx="1329.3" cy="298.9" r="2.2" fill="#0000ff"/><circle cx="1333.3" cy="301.8" r="2.2" fill="#0000ff"/><circle cx="1337.3" cy="246.6" r="2.2" fill="#0000ff"/><circle cx="1341.3" cy="274.0" r="2.2" fill="#0000ff"/><circle cx="1345.3" cy="280.9" r="2.2" fill="#0000ff"/><circle cx="1349.3" cy="271.7" r="2.2" fill="#0000ff"/><circle cx="1353.3" cy="238.0" r="2.2" fill="#0000ff"/><circle cx="1357.3" cy="252.8" r="2.2" fill="#0000ff"/><circle cx="1361.3" cy="325.1" r="2.2" fill="#0000ff"/><circle cx="1365.3" cy="257.8" r="2.2" fill="#0000ff"/><circle cx="1369.3" cy="295.7" r="2.2" fill="#0000ff"/><circle cx="1373.3" cy="256.9" r="2.2" fill="#0000ff"/><circle cx="1377.3" cy="259.9" r="2.2" fill="#0000ff"/><circle cx="1381.3" cy="278.8" r="2.2" fill="#0000ff"/><circle cx="1385.3" cy="263.1" r="2.2" fill="#0000ff"/><circle cx="1389.3" cy="313.9" r="2.2" fill="#0000ff"/><circle cx="1393.3" cy="261.0" r="2.2" fill="#0000ff"/><circle cx="1397.3" cy="266.9" r="2.2" fill="#0000ff"/><circle cx="1401.3" cy="271.7" r="2.2" fill="#0000ff"/><circle cx="1405.3" cy="257.8" r="2.2" fill="#0000ff"/><circle cx="1409.3" cy="231.8" r="2.2" fill="#0000ff"/><circle cx="1413.3" cy="264.0" r="2.2" fill="#0000ff"/><circle cx="1417.3" cy="259.9" r="2.2" fill="#0000ff"/><circle cx="1421.3" cy="269.9" r="2.2" fill="#0000ff"/><circle cx="1425.3" cy="293.9" r="2" fill="#fff" stroke="#0000ff" stroke-width="1"/><circle cx="1429.3" cy="251.9" r="2" fill="#fff" stroke="#0000ff" stroke-width="1"/><circle cx="1433.3" cy="247.8" r="2" fill="#fff" stroke="#0000ff" stroke-width="1"/><circle cx="1437.3" cy="382.8" r="2" fill="#fff" stroke="#0000ff" stroke-width="1"/><circle cx="1441.3" cy="377.1" r="2" fill="#fff" stroke="#0000ff" stroke-width="1"/><circle cx="1445.3" cy="377.1" r="2" fill="#fff" stroke="#0000ff" stroke-width="1"/><circle cx="1449.3" cy="384.0" r="2" fill="#fff" stroke="#0000ff" stroke-width="1"/><path d="M1453.3 393.5 L1456.8 397.0 L1453.3 400.5 L1449.8 397.0Z" fill="#ff0000"/><circle cx="1457.3" cy="365.0" r="2" fill="#fff" stroke="#0000ff" stroke-width="1"/><circle cx="1461.3" cy="368.7" r="2" fill="#fff" stroke="#0000ff" stroke-width="1"/><circle cx="1465.3" cy="378.9" r="2" fill="#fff" stroke="#0000ff" stroke-width="1"/><circle cx="1469.3" cy="304.8" r="2" fill="#fff" stroke="#0000ff" stroke-width="1"/><circle cx="1473.3" cy="298.9" r="2" fill="#fff" stroke="#0000ff" stroke-width="1"/><circle cx="1477.3" cy="311.9" r="2" fill="#fff" stroke="#0000ff" stroke-width="1"/><circle cx="1481.3" cy="253.9" r="2" fill="#fff" stroke="#0000ff" stroke-width="1"/><circle cx="1485.3" cy="285.0" r="2" fill="#fff" stroke="#0000ff" stroke-width="1"/><circle cx="1489.3" cy="259.9" r="2" fill="#fff" stroke="#0000ff" stroke-width="1"/><circle cx="1493.3" cy="305.9" r="2" fill="#fff" stroke="#0000ff" stroke-width="1"/><circle cx="1497.3" cy="283.8" r="2" fill="#fff" stroke="#0000ff" stroke-width="1"/><circle cx="1501.3" cy="290.9" r="2" fill="#fff" stroke="#0000ff" stroke-width="1"/><circle cx="1505.3" cy="341.8" r="2" fill="#fff" stroke="#0000ff" stroke-width="1"/><circle cx="1509.3" cy="265.8" r="2" fill="#fff" stroke="#0000ff" stroke-width="1"/><circle cx="1513.3" cy="271.7" r="2" fill="#fff" stroke="#0000ff" stroke-width="1"/><circle cx="1517.3" cy="261.9" r="2" fill="#fff" stroke="#0000ff" stroke-width="1"/><circle cx="1521.3" cy="280.9" r="2" fill="#fff" stroke="#0000ff" stroke-width="1"/><circle cx="1525.3" cy="259.9" r="2" fill="#fff" stroke="#0000ff" stroke-width="1"/><circle cx="1529.3" cy="285.9" r="2" fill="#fff" stroke="#0000ff" stroke-width="1"/><circle cx="1533.3" cy="274.9" r="2" fill="#fff" stroke="#0000ff" stroke-width="1"/><circle cx="1537.3" cy="287.9" r="2" fill="#fff" stroke="#0000ff" stroke-width="1"/><circle cx="1541.3" cy="257.8" r="2" fill="#fff" stroke="#0000ff" stroke-width="1"/><circle cx="1545.3" cy="264.9" r="2" fill="#fff" stroke="#0000ff" stroke-width="1"/><circle cx="1549.3" cy="278.8" r="2" fill="#fff" stroke="#0000ff" stroke-width="1"/><circle cx="1553.3" cy="249.8" r="2" fill="#fff" stroke="#0000ff" stroke-width="1"/><circle cx="1557.3" cy="276.7" r="2" fill="#fff" stroke="#0000ff" stroke-width="1"/><circle cx="1561.3" cy="259.0" r="2" fill="#fff" stroke="#0000ff" stroke-width="1"/><circle cx="1565.3" cy="267.8" r="2" fill="#fff" stroke="#0000ff" stroke-width="1"/><circle cx="1569.3" cy="240.9" r="2" fill="#fff" stroke="#0000ff" stroke-width="1"/><circle cx="1573.3" cy="267.8" r="2" fill="#fff" stroke="#0000ff" stroke-width="1"/><circle cx="1577.3" cy="289.7" r="2" fill="#fff" stroke="#0000ff" stroke-width="1"/><circle cx="1581.3" cy="297.7" r="2" fill="#fff" stroke="#0000ff" stroke-width="1"/><circle cx="1585.3" cy="295.9" r="2" fill="#fff" stroke="#0000ff" stroke-width="1"/><circle cx="1589.3" cy="320.8" r="2" fill="#fff" stroke="#0000ff" stroke-width="1"/><circle cx="1593.3" cy="264.9" r="2" fill="#fff" stroke="#0000ff" stroke-width="1"/><circle cx="1597.3" cy="246.6" r="2" fill="#fff" stroke="#0000ff" stroke-width="1"/><circle cx="1601.3" cy="259.9" r="2" fill="#fff" stroke="#0000ff" stroke-width="1"/><circle cx="1605.3" cy="276.7" r="2" fill="#fff" stroke="#0000ff" stroke-width="1"/><circle cx="1609.3" cy="278.8" r="2" fill="#fff" stroke="#0000ff" stroke-width="1"/><circle cx="1613.3" cy="276.7" r="2" fill="#fff" stroke="#0000ff" stroke-width="1"/><circle cx="1617.3" cy="265.8" r="2" fill="#fff" stroke="#0000ff" stroke-width="1"/><circle cx="1621.3" cy="269.0" r="2" fill="#fff" stroke="#0000ff" stroke-width="1"/><circle cx="1625.3" cy="250.7" r="2" fill="#fff" stroke="#0000ff" stroke-width="1"/><circle cx="1629.3" cy="277.7" r="2" fill="#fff" stroke="#0000ff" stroke-width="1"/><circle cx="1633.3" cy="292.7" r="2" fill="#fff" stroke="#0000ff" stroke-width="1"/><circle cx="1637.3" cy="266.9" r="2" fill="#fff" stroke="#0000ff" stroke-width="1"/><circle cx="1641.3" cy="259.0" r="2" fill="#fff" stroke="#0000ff" stroke-width="1"/><circle cx="1645.3" cy="235.9" r="2" fill="#fff" stroke="#0000ff" stroke-width="1"/><circle cx="1649.3" cy="274.0" r="2" fill="#fff" stroke="#0000ff" stroke-width="1"/><circle cx="1653.3" cy="282.9" r="2.2" fill="#0000ff"/><circle cx="1657.3" cy="238.0" r="2.2" fill="#0000ff"/><circle cx="1661.3" cy="277.7" r="2.2" fill="#0000ff"/><circle cx="1665.3" cy="281.8" r="2.2" fill="#0000ff"/><circle cx="1669.3" cy="278.8" r="2.2" fill="#0000ff"/><circle cx="1673.3" cy="267.8" r="2.2" fill="#0000ff"/><circle cx="1677.3" cy="272.9" r="2.2" fill="#0000ff"/><circle cx="1681.3" cy="246.0" r="2.2" fill="#0000ff"/><circle cx="1685.3" cy="264.9" r="2.2" fill="#0000ff"/><circle cx="1689.3" cy="316.9" r="2.2" fill="#0000ff"/><circle cx="1693.3" cy="269.9" r="2.2" fill="#0000ff"/><circle cx="1697.3" cy="263.1" r="2.2" fill="#0000ff"/><circle cx="1701.3" cy="270.8" r="2.2" fill="#0000ff"/><circle cx="1705.3" cy="280.9" r="2.2" fill="#0000ff"/><circle cx="1709.3" cy="298.9" r="2.2" fill="#0000ff"/><circle cx="1713.3" cy="269.9" r="2.2" fill="#0000ff"/><circle cx="1717.3" cy="261.9" r="2.2" fill="#0000ff"/><circle cx="1721.3" cy="264.0" r="2.2" fill="#0000ff"/><circle cx="1725.3" cy="247.8" r="2.2" fill="#0000ff"/><circle cx="1729.3" cy="279.7" r="2.2" fill="#0000ff"/><circle cx="1733.3" cy="253.9" r="2.2" fill="#0000ff"/><circle cx="1737.3" cy="261.9" r="2.2" fill="#0000ff"/><circle cx="1741.3" cy="266.9" r="2.2" fill="#0000ff"/><circle cx="1745.3" cy="259.0" r="2.2" fill="#0000ff"/><circle cx="1749.3" cy="287.9" r="2.2" fill="#0000ff"/><circle cx="1753.3" cy="236.8" r="2.2" fill="#0000ff"/><circle cx="1757.3" cy="291.8" r="2.2" fill="#0000ff"/><circle cx="1761.3" cy="266.9" r="2.2" fill="#0000ff"/><circle cx="1765.3" cy="264.9" r="2.2" fill="#0000ff"/><circle cx="1769.3" cy="276.7" r="2.2" fill="#0000ff"/><circle cx="1773.3" cy="311.9" r="2.2" fill="#0000ff"/><circle cx="1097.3" cy="421.0" r="2.2" fill="#ff00ff"/><circle cx="1101.3" cy="419.5" r="2.2" fill="#ff00ff"/><circle cx="1105.3" cy="417.5" r="2.2" fill="#ff00ff"/><circle cx="1109.3" cy="419.5" r="2.2" fill="#ff00ff"/><circle cx="1113.3" cy="419.5" r="2.2" fill="#ff00ff"/><circle cx="1117.3" cy="419.5" r="2.2" fill="#ff00ff"/><circle cx="1121.3" cy="421.0" r="2.2" fill="#ff00ff"/><circle cx="1125.3" cy="419.5" r="2.2" fill="#ff00ff"/><circle cx="1129.3" cy="418.0" r="2.2" fill="#ff00ff"/><circle cx="1133.3" cy="419.5" r="2.2" fill="#ff00ff"/><circle cx="1137.3" cy="419.5" r="2.2" fill="#ff00ff"/><circle cx="1141.3" cy="417.5" r="2.2" fill="#ff00ff"/><circle cx="1145.3" cy="417.5" r="2.2" fill="#ff00ff"/><circle cx="1149.3" cy="419.5" r="2.2" fill="#ff00ff"/><circle cx="1153.3" cy="418.0" r="2.2" fill="#ff00ff"/><circle cx="1157.3" cy="419.5" r="2.2" fill="#ff00ff"/><circle cx="1161.3" cy="417.5" r="2.2" fill="#ff00ff"/><circle cx="1165.3" cy="419.5" r="2.2" fill="#ff00ff"/><circle cx="1169.3" cy="419.5" r="2.2" fill="#ff00ff"/><circle cx="1173.3" cy="418.0" r="2.2" fill="#ff00ff"/><circle cx="1177.3" cy="419.5" r="2.2" fill="#ff00ff"/><circle cx="1181.3" cy="417.5" r="2.2" fill="#ff00ff"/><circle cx="1185.3" cy="419.5" r="2.2" fill="#ff00ff"/><circle cx="1189.3" cy="418.0" r="2.2" fill="#ff00ff"/><circle cx="1193.3" cy="419.5" r="2.2" fill="#ff00ff"/><circle cx="1197.3" cy="419.5" r="2.2" fill="#ff00ff"/><circle cx="1201.3" cy="420.5" r="2.2" fill="#ff00ff"/><circle cx="1205.3" cy="417.5" r="2.2" fill="#ff00ff"/><circle cx="1209.3" cy="419.5" r="2.2" fill="#ff00ff"/><circle cx="1213.3" cy="419.5" r="2.2" fill="#ff00ff"/><circle cx="1217.3" cy="420.5" r="2.2" fill="#ff00ff"/><circle cx="1221.3" cy="419.5" r="2.2" fill="#ff00ff"/><circle cx="1225.3" cy="419.5" r="2.2" fill="#ff00ff"/><circle cx="1229.3" cy="418.0" r="2.2" fill="#ff00ff"/><circle cx="1233.3" cy="421.0" r="2.2" fill="#ff00ff"/><circle cx="1237.3" cy="419.5" r="2.2" fill="#ff00ff"/><circle cx="1241.3" cy="419.5" r="2.2" fill="#ff00ff"/><circle cx="1245.3" cy="419.5" r="2.2" fill="#ff00ff"/><circle cx="1249.3" cy="418.0" r="2.2" fill="#ff00ff"/><circle cx="1253.3" cy="420.0" r="2.2" fill="#ff00ff"/><circle cx="1257.3" cy="417.5" r="2.2" fill="#ff00ff"/><circle cx="1261.3" cy="421.0" r="2.2" fill="#ff00ff"/><circle cx="1265.3" cy="420.0" r="2.2" fill="#ff00ff"/><circle cx="1269.3" cy="420.0" r="2.2" fill="#ff00ff"/><circle cx="1273.3" cy="421.0" r="2.2" fill="#ff00ff"/><circle cx="1277.3" cy="420.5" r="2.2" fill="#ff00ff"/><circle cx="1281.3" cy="418.0" r="2.2" fill="#ff00ff"/><circle cx="1285.3" cy="419.5" r="2.2" fill="#ff00ff"/><circle cx="1289.3" cy="418.0" r="2.2" fill="#ff00ff"/><circle cx="1293.3" cy="419.5" r="2.2" fill="#ff00ff"/><circle cx="1297.3" cy="420.5" r="2.2" fill="#ff00ff"/><circle cx="1301.3" cy="420.0" r="2.2" fill="#ff00ff"/><circle cx="1305.3" cy="421.0" r="2.2" fill="#ff00ff"/><circle cx="1309.3" cy="420.0" r="2.2" fill="#ff00ff"/><circle cx="1313.3" cy="420.5" r="2.2" fill="#ff00ff"/><circle cx="1317.3" cy="419.5" r="2.2" fill="#ff00ff"/><circle cx="1321.3" cy="419.5" r="2.2" fill="#ff00ff"/><circle cx="1325.3" cy="417.5" r="2.2" fill="#ff00ff"/><circle cx="1329.3" cy="419.5" r="2.2" fill="#ff00ff"/><circle cx="1333.3" cy="421.0" r="2.2" fill="#ff00ff"/><circle cx="1337.3" cy="419.5" r="2.2" fill="#ff00ff"/><circle cx="1341.3" cy="420.0" r="2.2" fill="#ff00ff"/><circle cx="1345.3" cy="417.5" r="2.2" fill="#ff00ff"/><circle cx="1349.3" cy="419.5" r="2.2" fill="#ff00ff"/><circle cx="1353.3" cy="419.5" r="2.2" fill="#ff00ff"/><circle cx="1357.3" cy="421.0" r="2.2" fill="#ff00ff"/><circle cx="1361.3" cy="421.0" r="2.2" fill="#ff00ff"/><circle cx="1365.3" cy="421.0" r="2.2" fill="#ff00ff"/><circle cx="1369.3" cy="420.0" r="2.2" fill="#ff00ff"/><circle cx="1373.3" cy="420.0" r="2.2" fill="#ff00ff"/><circle cx="1377.3" cy="419.5" r="2.2" fill="#ff00ff"/><circle cx="1381.3" cy="419.5" r="2.2" fill="#ff00ff"/><circle cx="1385.3" cy="420.5" r="2.2" fill="#ff00ff"/><circle cx="1389.3" cy="420.0" r="2.2" fill="#ff00ff"/><circle cx="1393.3" cy="419.5" r="2.2" fill="#ff00ff"/><circle cx="1397.3" cy="419.5" r="2.2" fill="#ff00ff"/><circle cx="1401.3" cy="420.5" r="2.2" fill="#ff00ff"/><circle cx="1405.3" cy="420.0" r="2.2" fill="#ff00ff"/><circle cx="1409.3" cy="420.5" r="2.2" fill="#ff00ff"/><circle cx="1413.3" cy="417.5" r="2.2" fill="#ff00ff"/><circle cx="1417.3" cy="421.0" r="2.2" fill="#ff00ff"/><circle cx="1421.3" cy="419.5" r="2.2" fill="#ff00ff"/><circle cx="1425.3" cy="419.0" r="1.7" fill="#fff" stroke="#ff00ff" stroke-width="1"/><circle cx="1429.3" cy="420.5" r="1.7" fill="#fff" stroke="#ff00ff" stroke-width="1"/><circle cx="1433.3" cy="419.5" r="1.7" fill="#fff" stroke="#ff00ff" stroke-width="1"/><circle cx="1437.3" cy="419.5" r="1.7" fill="#fff" stroke="#ff00ff" stroke-width="1"/><circle cx="1441.3" cy="419.0" r="1.7" fill="#fff" stroke="#ff00ff" stroke-width="1"/><circle cx="1445.3" cy="419.5" r="1.7" fill="#fff" stroke="#ff00ff" stroke-width="1"/><circle cx="1449.3" cy="419.5" r="1.7" fill="#fff" stroke="#ff00ff" stroke-width="1"/><path d="M1453.3 415.0 L1456.8 418.5 L1453.3 422.0 L1449.8 418.5Z" fill="#ff0000"/><circle cx="1457.3" cy="419.5" r="1.7" fill="#fff" stroke="#ff00ff" stroke-width="1"/><circle cx="1461.3" cy="419.5" r="1.7" fill="#fff" stroke="#ff00ff" stroke-width="1"/><circle cx="1465.3" cy="420.0" r="1.7" fill="#fff" stroke="#ff00ff" stroke-width="1"/><circle cx="1469.3" cy="420.0" r="1.7" fill="#fff" stroke="#ff00ff" stroke-width="1"/><circle cx="1473.3" cy="419.0" r="1.7" fill="#fff" stroke="#ff00ff" stroke-width="1"/><circle cx="1477.3" cy="419.5" r="1.7" fill="#fff" stroke="#ff00ff" stroke-width="1"/><circle cx="1481.3" cy="419.5" r="1.7" fill="#fff" stroke="#ff00ff" stroke-width="1"/><circle cx="1485.3" cy="419.0" r="1.7" fill="#fff" stroke="#ff00ff" stroke-width="1"/><circle cx="1489.3" cy="420.0" r="1.7" fill="#fff" stroke="#ff00ff" stroke-width="1"/><circle cx="1493.3" cy="418.5" r="1.7" fill="#fff" stroke="#ff00ff" stroke-width="1"/><circle cx="1497.3" cy="419.5" r="1.7" fill="#fff" stroke="#ff00ff" stroke-width="1"/><circle cx="1501.3" cy="420.0" r="1.7" fill="#fff" stroke="#ff00ff" stroke-width="1"/><circle cx="1505.3" cy="418.5" r="1.7" fill="#fff" stroke="#ff00ff" stroke-width="1"/><circle cx="1509.3" cy="420.0" r="1.7" fill="#fff" stroke="#ff00ff" stroke-width="1"/><circle cx="1513.3" cy="420.5" r="1.7" fill="#fff" stroke="#ff00ff" stroke-width="1"/><circle cx="1517.3" cy="420.0" r="1.7" fill="#fff" stroke="#ff00ff" stroke-width="1"/><circle cx="1521.3" cy="419.5" r="1.7" fill="#fff" stroke="#ff00ff" stroke-width="1"/><circle cx="1525.3" cy="419.5" r="1.7" fill="#fff" stroke="#ff00ff" stroke-width="1"/><circle cx="1529.3" cy="419.5" r="1.7" fill="#fff" stroke="#ff00ff" stroke-width="1"/><circle cx="1533.3" cy="419.5" r="1.7" fill="#fff" stroke="#ff00ff" stroke-width="1"/><circle cx="1537.3" cy="419.5" r="1.7" fill="#fff" stroke="#ff00ff" stroke-width="1"/><circle cx="1541.3" cy="419.5" r="1.7" fill="#fff" stroke="#ff00ff" stroke-width="1"/><circle cx="1545.3" cy="419.5" r="1.7" fill="#fff" stroke="#ff00ff" stroke-width="1"/><circle cx="1549.3" cy="419.5" r="1.7" fill="#fff" stroke="#ff00ff" stroke-width="1"/><circle cx="1553.3" cy="419.0" r="1.7" fill="#fff" stroke="#ff00ff" stroke-width="1"/><circle cx="1557.3" cy="419.5" r="1.7" fill="#fff" stroke="#ff00ff" stroke-width="1"/><circle cx="1561.3" cy="418.5" r="1.7" fill="#fff" stroke="#ff00ff" stroke-width="1"/><circle cx="1565.3" cy="418.5" r="1.7" fill="#fff" stroke="#ff00ff" stroke-width="1"/><circle cx="1569.3" cy="419.5" r="1.7" fill="#fff" stroke="#ff00ff" stroke-width="1"/><circle cx="1573.3" cy="419.5" r="1.7" fill="#fff" stroke="#ff00ff" stroke-width="1"/><circle cx="1577.3" cy="420.0" r="1.7" fill="#fff" stroke="#ff00ff" stroke-width="1"/><circle cx="1581.3" cy="420.5" r="1.7" fill="#fff" stroke="#ff00ff" stroke-width="1"/><circle cx="1585.3" cy="420.5" r="1.7" fill="#fff" stroke="#ff00ff" stroke-width="1"/><circle cx="1589.3" cy="419.5" r="1.7" fill="#fff" stroke="#ff00ff" stroke-width="1"/><circle cx="1593.3" cy="419.5" r="1.7" fill="#fff" stroke="#ff00ff" stroke-width="1"/><circle cx="1597.3" cy="419.0" r="1.7" fill="#fff" stroke="#ff00ff" stroke-width="1"/><circle cx="1601.3" cy="420.0" r="1.7" fill="#fff" stroke="#ff00ff" stroke-width="1"/><circle cx="1605.3" cy="420.0" r="1.7" fill="#fff" stroke="#ff00ff" stroke-width="1"/><circle cx="1609.3" cy="420.0" r="1.7" fill="#fff" stroke="#ff00ff" stroke-width="1"/><circle cx="1613.3" cy="420.0" r="1.7" fill="#fff" stroke="#ff00ff" stroke-width="1"/><circle cx="1617.3" cy="419.5" r="1.7" fill="#fff" stroke="#ff00ff" stroke-width="1"/><circle cx="1621.3" cy="419.0" r="1.7" fill="#fff" stroke="#ff00ff" stroke-width="1"/><circle cx="1625.3" cy="420.0" r="1.7" fill="#fff" stroke="#ff00ff" stroke-width="1"/><circle cx="1629.3" cy="419.5" r="1.7" fill="#fff" stroke="#ff00ff" stroke-width="1"/><circle cx="1633.3" cy="419.5" r="1.7" fill="#fff" stroke="#ff00ff" stroke-width="1"/><circle cx="1637.3" cy="419.5" r="1.7" fill="#fff" stroke="#ff00ff" stroke-width="1"/><circle cx="1641.3" cy="419.5" r="1.7" fill="#fff" stroke="#ff00ff" stroke-width="1"/><circle cx="1645.3" cy="419.0" r="1.7" fill="#fff" stroke="#ff00ff" stroke-width="1"/><circle cx="1649.3" cy="419.5" r="1.7" fill="#fff" stroke="#ff00ff" stroke-width="1"/><circle cx="1653.3" cy="419.5" r="2.2" fill="#ff00ff"/><circle cx="1657.3" cy="421.0" r="2.2" fill="#ff00ff"/><circle cx="1661.3" cy="419.5" r="2.2" fill="#ff00ff"/><circle cx="1665.3" cy="419.5" r="2.2" fill="#ff00ff"/><circle cx="1669.3" cy="419.5" r="2.2" fill="#ff00ff"/><circle cx="1673.3" cy="419.5" r="2.2" fill="#ff00ff"/><circle cx="1677.3" cy="419.5" r="2.2" fill="#ff00ff"/><circle cx="1681.3" cy="421.0" r="2.2" fill="#ff00ff"/><circle cx="1685.3" cy="419.5" r="2.2" fill="#ff00ff"/><circle cx="1689.3" cy="419.5" r="2.2" fill="#ff00ff"/><circle cx="1693.3" cy="418.0" r="2.2" fill="#ff00ff"/><circle cx="1697.3" cy="417.5" r="2.2" fill="#ff00ff"/><circle cx="1701.3" cy="419.5" r="2.2" fill="#ff00ff"/><circle cx="1705.3" cy="420.5" r="2.2" fill="#ff00ff"/><circle cx="1709.3" cy="421.0" r="2.2" fill="#ff00ff"/><circle cx="1713.3" cy="421.0" r="2.2" fill="#ff00ff"/><circle cx="1717.3" cy="420.0" r="2.2" fill="#ff00ff"/><circle cx="1721.3" cy="419.5" r="2.2" fill="#ff00ff"/><circle cx="1725.3" cy="419.5" r="2.2" fill="#ff00ff"/><circle cx="1729.3" cy="420.0" r="2.2" fill="#ff00ff"/><circle cx="1733.3" cy="420.0" r="2.2" fill="#ff00ff"/><circle cx="1737.3" cy="420.0" r="2.2" fill="#ff00ff"/><circle cx="1741.3" cy="420.0" r="2.2" fill="#ff00ff"/><circle cx="1745.3" cy="420.5" r="2.2" fill="#ff00ff"/><circle cx="1749.3" cy="419.5" r="2.2" fill="#ff00ff"/><circle cx="1753.3" cy="419.5" r="2.2" fill="#ff00ff"/><circle cx="1757.3" cy="419.5" r="2.2" fill="#ff00ff"/><circle cx="1761.3" cy="421.0" r="2.2" fill="#ff00ff"/><circle cx="1765.3" cy="420.5" r="2.2" fill="#ff00ff"/><circle cx="1769.3" cy="420.0" r="2.2" fill="#ff00ff"/><circle cx="1773.3" cy="419.5" r="2.2" fill="#ff00ff"/></svg>
<div class="t" style="left:1055px;top:41px;font-size:12px;line-height:12px;color:#000;font-weight:bold;letter-spacing:0.47px">2025 May 7; (3642) Frieden occults UCAC4 458-058120 Observed by Toshihiro Horikawa</div>
<div class="t" style="left:1597px;top:41px;font-size:12px;line-height:12px;color:#000;">/ PSF-Frame Photometry /</div>
<div class="t" style="left:1040px;top:364px;font-size:11px;line-height:11px;color:#000;width:47px;text-align:right;letter-spacing:0px"><span style="display:inline-block;transform:scaleX(0.92);transform-origin:100% 50%">1000</span></div>
<div class="t" style="left:1040px;top:316px;font-size:11px;line-height:11px;color:#000;width:47px;text-align:right;letter-spacing:0px"><span style="display:inline-block;transform:scaleX(0.92);transform-origin:100% 50%">2000</span></div>
<div class="t" style="left:1040px;top:268px;font-size:11px;line-height:11px;color:#000;width:47px;text-align:right;letter-spacing:0px"><span style="display:inline-block;transform:scaleX(0.92);transform-origin:100% 50%">3000</span></div>
<div class="t" style="left:1040px;top:220px;font-size:11px;line-height:11px;color:#000;width:47px;text-align:right;letter-spacing:0px"><span style="display:inline-block;transform:scaleX(0.92);transform-origin:100% 50%">4000</span></div>
<div class="t" style="left:1040px;top:172px;font-size:11px;line-height:11px;color:#000;width:47px;text-align:right;letter-spacing:0px"><span style="display:inline-block;transform:scaleX(0.92);transform-origin:100% 50%">5000</span></div>
<div class="t" style="left:1040px;top:124px;font-size:11px;line-height:11px;color:#000;width:47px;text-align:right;letter-spacing:0px"><span style="display:inline-block;transform:scaleX(0.92);transform-origin:100% 50%">6000</span></div>
<div class="t" style="left:1040px;top:76px;font-size:11px;line-height:11px;color:#000;width:47px;text-align:right;letter-spacing:0px"><span style="display:inline-block;transform:scaleX(0.92);transform-origin:100% 50%">7000</span></div>
<div class="t" style="left:1089px;top:411px;font-size:11px;line-height:11px;color:#000;">0</div>
<div class="t" style="left:1141.3px;top:427px;font-size:11px;line-height:11px;color:#000;width:40px;text-align:center;"><span style="display:inline-block;transform:scaleX(0.92);transform-origin:50% 50%">300</span></div>
<div class="t" style="left:1261.3px;top:427px;font-size:11px;line-height:11px;color:#000;width:40px;text-align:center;"><span style="display:inline-block;transform:scaleX(0.92);transform-origin:50% 50%">330</span></div>
<div class="t" style="left:1381.3px;top:427px;font-size:11px;line-height:11px;color:#000;width:40px;text-align:center;"><span style="display:inline-block;transform:scaleX(0.92);transform-origin:50% 50%">360</span></div>
<div class="t" style="left:1501.3px;top:427px;font-size:11px;line-height:11px;color:#000;width:40px;text-align:center;"><span style="display:inline-block;transform:scaleX(0.92);transform-origin:50% 50%">390</span></div>
<div class="t" style="left:1621.3px;top:427px;font-size:11px;line-height:11px;color:#000;width:40px;text-align:center;"><span style="display:inline-block;transform:scaleX(0.92);transform-origin:50% 50%">420</span></div>
<div class="t" style="left:1741.3px;top:427px;font-size:11px;line-height:11px;color:#000;width:40px;text-align:center;"><span style="display:inline-block;transform:scaleX(0.92);transform-origin:50% 50%">450</span></div>
<div class="t" style="left:1055px;top:444px;font-size:12px;line-height:12px;color:#000;letter-spacing:-0.2px">Exp=253msec / Frm No.373.0 / Frm Mid= 17h3m35.0997s,  End= 35.2262s</div>
<div style="position:absolute;left:1040px;top:467px;width:753px;height:255px;border-top:1px solid #fff;border-left:1px solid #fff"></div>
<div class="t" style="left:1046px;top:473px;font-size:12px;line-height:12px;color:#000;">Current-</div>
<div class="t" style="left:1055px;top:489px;font-size:12px;line-height:12px;color:#000;">Frame</div>
<div class="t" style="left:1107px;top:473px;font-size:12px;line-height:12px;color:#000;">Luminous</div>
<div class="t" style="left:1107px;top:489px;font-size:12px;line-height:12px;color:#000;">Intensity</div>
<div class="ed" style="left:1047px;top:504px;width:49px;height:19px;font-size:12px;line-height:17px;color:#000;padding-left:2px;">373.0</div>
<div class="ed" style="left:1103px;top:504px;width:56px;height:19px;font-size:12px;line-height:17px;color:#000;padding-left:2px;">460.6</div>
<div style="position:absolute;left:1166px;top:474px;width:161px;height:19px;border:1px solid #e0e0e0;background:repeating-linear-gradient(45deg,#f6f6f6 0 1px,#e9e9e9 1px 2px)"></div>
<div class="btn" style="left:1166px;top:474px;width:17px;height:19px;font-size:12px;line-height:18px;color:#000;"><div style="position:absolute;left:5px;top:4px;width:0;height:0;border-top:4.5px solid transparent;border-bottom:4.5px solid transparent;border-right:5px solid #000"></div></div>
<div class="btn" style="left:1309px;top:474px;width:17px;height:19px;font-size:12px;line-height:18px;color:#000;"><div style="position:absolute;left:6px;top:4px;width:0;height:0;border-top:4.5px solid transparent;border-bottom:4.5px solid transparent;border-left:5px solid #000"></div></div>
<div class="btn" style="left:1241px;top:474px;width:17px;height:19px;font-size:12px;line-height:18px;color:#000;"></div>
<div class="btn" style="left:1167px;top:499px;width:41px;height:25px;font-size:12px;line-height:24px;color:#000;letter-spacing:-0.5px">-10Sec</div>
<div class="btn" style="left:1211px;top:499px;width:33px;height:25px;font-size:12px;line-height:24px;color:#000;letter-spacing:-0.5px">-1Sec</div>
<div class="btn" style="left:1247px;top:499px;width:35px;height:25px;font-size:12px;line-height:24px;color:#000;letter-spacing:-0.5px">+1Sec</div>
<div class="btn" style="left:1285px;top:499px;width:41px;height:25px;font-size:12px;line-height:24px;color:#000;letter-spacing:-0.6px">+10Sec</div>
<div class="t" style="left:1332px;top:480px;font-size:12px;line-height:12px;color:#000;">Scale</div>
<div class="ed" style="left:1371px;top:473px;width:22px;height:19px;font-size:12px;line-height:17px;color:#000;padding-left:2px;">2</div>
<div class="btn" style="left:1395px;top:471px;width:16px;height:12px;"><div class="tri up" style="left:3px;top:3px"></div></div>
<div class="btn" style="left:1395px;top:483px;width:16px;height:12px;"><div class="tri dn" style="left:3px;top:3px"></div></div>
<div class="t" style="left:1335px;top:504px;font-size:12px;line-height:12px;color:#000;">Radius</div>
<div class="ed" style="left:1371px;top:504px;width:22px;height:19px;font-size:12px;line-height:17px;color:#000;padding-left:2px;">2</div>
<div class="btn" style="left:1395px;top:503px;width:16px;height:12px;"><div class="tri up" style="left:3px;top:3px"></div></div>
<div class="btn" style="left:1395px;top:515px;width:16px;height:12px;"><div class="tri dn" style="left:3px;top:3px"></div></div>
<div class="cb" style="left:1047px;top:533px;"><svg width="9" height="9" viewBox="0 0 9 9" style="position:absolute;left:1px;top:1px"><path d="M1 4 L3.5 6.5 L8 1.5" stroke="#000" stroke-width="1.8" fill="none"/></svg></div>
<div class="t" style="left:1064px;top:534px;font-size:12px;line-height:12px;color:#000;letter-spacing:-0.2px">Show Image of Clicked point</div>
<div class="cb" style="left:1047px;top:549px;"></div>
<div class="t" style="left:1064px;top:550px;font-size:12px;line-height:12px;color:#000;letter-spacing:-0.2px">Reproduce Aperture Position</div>
<div class="btn" style="left:1221px;top:532px;width:73px;height:25px;font-size:12px;line-height:24px;color:#000;">Save Image</div>
<div class="btn" style="left:1299px;top:532px;width:118px;height:25px;font-size:12px;line-height:24px;color:#000;">Copy to ClipBoard</div>
<div class="btn" style="left:1279px;top:564px;width:122px;height:27px;font-size:14px;line-height:26px;color:#102040;font-weight:bold;"><span style="position:relative;left:-4px">Lunar Identification</span></div>
<div class="gb" style="left:1418px;top:474px;width:48px;height:81px;"></div>
<div class="gl" style="left:1424px;top:468.5px;font-size:12px;line-height:12px;">Y Axis</div>
<div class="t" style="left:1423px;top:480px;font-size:12px;line-height:12px;color:#000;letter-spacing:-0.4px">Min</div>
<div class="t" style="left:1445px;top:480px;font-size:12px;line-height:12px;color:#000;letter-spacing:-0.4px">Max</div>
<div class="btn" style="left:1423px;top:492px;width:16px;height:17px;font-size:12px;line-height:16px;color:#000;"><div class="tri up" style="left:3px;top:5px"></div></div>
<div class="btn" style="left:1423px;top:532px;width:16px;height:17px;font-size:12px;line-height:16px;color:#000;"><div class="tri dn" style="left:3px;top:5px"></div></div>
<div class="btn" style="left:1445px;top:492px;width:16px;height:17px;font-size:12px;line-height:16px;color:#000;"><div class="tri up" style="left:3px;top:5px"></div></div>
<div class="btn" style="left:1445px;top:532px;width:16px;height:17px;font-size:12px;line-height:16px;color:#000;"><div class="tri dn" style="left:3px;top:5px"></div></div>
<div class="btn" style="left:1423px;top:512px;width:16px;height:17px;font-size:12px;line-height:16px;color:#000;"></div>
<div style="position:absolute;left:1445px;top:512px;width:16px;height:17px;background:repeating-conic-gradient(#808080 0 25%,#fff 0 50%) 0 0/2px 2px;border:1px solid #c0c0c0"></div>
<div class="gb" style="left:1470px;top:474px;width:59px;height:53px;"></div>
<div class="gl" style="left:1476px;top:468.5px;font-size:12px;line-height:12px;">Line</div>
<div class="cb" style="left:1477px;top:482px;"><svg width="9" height="9" viewBox="0 0 9 9" style="position:absolute;left:1px;top:1px"><path d="M1 4 L3.5 6.5 L8 1.5" stroke="#000" stroke-width="1.8" fill="none"/></svg></div>
<div class="t" style="left:1495px;top:484px;font-size:12px;line-height:12px;color:#000;">Axis</div>
<div class="cb" style="left:1477px;top:496px;"><svg width="9" height="9" viewBox="0 0 9 9" style="position:absolute;left:1px;top:1px"><path d="M1 4 L3.5 6.5 L8 1.5" stroke="#000" stroke-width="1.8" fill="none"/></svg></div>
<div class="t" style="left:1495px;top:498px;font-size:12px;line-height:12px;color:#000;">Data</div>
<div class="btn" style="left:1477px;top:508px;width:46px;height:16px;font-size:12px;line-height:15px;color:#000;">Hilight</div>
<div class="btn" style="left:1470px;top:532px;width:64px;height:27px;font-size:12px;line-height:26px;color:#000;">[3D] Image</div>
<div class="gb" style="left:1534px;top:474px;width:55px;height:53px;"></div>
<div class="gl" style="left:1540px;top:468.5px;font-size:12px;line-height:12px;">Width</div>
<div class="rb" style="left:1542px;top:486px;"><div style="position:absolute;left:3px;top:3px;width:4px;height:4px;border-radius:2px;background:#000"></div></div>
<div class="t" style="left:1559px;top:485px;font-size:12px;line-height:12px;color:#000;">Part</div>
<div class="rb" style="left:1542px;top:507px;"></div>
<div class="t" style="left:1559px;top:506px;font-size:12px;line-height:12px;color:#000;">Entire</div>
<div class="btn" style="left:1595px;top:471px;width:143px;height:19px;font-size:12px;line-height:18px;color:#000;">Correction for absorption</div>
<div class="btn" style="left:1596px;top:491px;width:101px;height:18px;font-size:12px;line-height:17px;color:#000;">Noise Reduction</div>
<div class="btn" style="left:1701px;top:491px;width:37px;height:18px;font-size:12px;line-height:17px;color:#000;">Reset</div>
<div class="btn" style="left:1751px;top:472px;width:35px;height:24px;font-size:12px;line-height:23px;color:#000;">close</div>
<div class="cb" style="left:1594px;top:512px;"><svg width="9" height="9" viewBox="0 0 9 9" style="position:absolute;left:1px;top:1px"><path d="M1 4 L3.5 6.5 L8 1.5" stroke="#000" stroke-width="1.8" fill="none"/></svg></div>
<div class="t" style="left:1611px;top:513px;font-size:12px;line-height:12px;color:#000;">Information</div>
<div class="gb" style="left:1694px;top:523px;width:94px;height:35px;"></div>
<div class="gl" style="left:1700px;top:517.5px;font-size:12px;line-height:12px;">Object</div>
<div class="cb" style="left:1744px;top:510px;"><svg width="9" height="9" viewBox="0 0 9 9" style="position:absolute;left:1px;top:1px"><path d="M1 4 L3.5 6.5 L8 1.5" stroke="#000" stroke-width="1.8" fill="none"/></svg></div>
<div class="t" style="left:1762px;top:511px;font-size:12px;line-height:12px;color:#000;">ID</div>
<div class="btn" style="left:1699px;top:533px;width:18px;height:17px;font-size:12px;line-height:16px;color:#000;border-color:#a0a0a0 #fff #fff #a0a0a0;box-shadow:none">A</div>
<div class="btn" style="left:1721px;top:533px;width:18px;height:17px;font-size:12px;line-height:16px;color:#000;border-color:#a0a0a0 #fff #fff #a0a0a0;box-shadow:none">B</div>
<div class="btn" style="left:1743px;top:533px;width:18px;height:17px;font-size:12px;line-height:16px;color:#000;border-color:#a0a0a0 #fff #fff #a0a0a0;box-shadow:none">C</div>
<div class="btn" style="left:1765px;top:533px;width:18px;height:17px;font-size:12px;line-height:16px;color:#000;">L</div>
<div class="btn" style="left:1409px;top:563px;width:170px;height:28px;font-size:14px;line-height:27px;color:#000;font-weight:bold;">Diffraction Analysis</div>
<div class="btn" style="left:1583px;top:563px;width:106px;height:28px;font-size:14px;line-height:27px;color:#101830;font-weight:bold;">Make Report</div>
<div style="position:absolute;left:1038px;top:597px;width:754px;height:2px;border-top:1px solid #a0a0a0;border-bottom:1px solid #fff"></div>
<div class="gb" style="left:1047px;top:624px;width:736px;height:91px;"></div>
<div class="gl" style="left:1053px;top:618.5px;font-size:12px;line-height:12px;">S/N vs Error</div>
<div class="t" style="left:1056px;top:636px;font-size:13px;line-height:13px;color:#000;font-weight:bold;">S/N (Full drop)</div>
<div class="ed" style="left:1159px;top:633px;width:57px;height:26px;font-size:15px;line-height:24px;color:#0000ee;padding-left:6px;font-weight:bold;">4.8</div>
<div class="t" style="left:1240px;top:636px;font-size:13px;line-height:13px;color:#000;font-weight:bold;">S/N</div>
<div class="ed" style="left:1271px;top:633px;width:48px;height:25px;font-size:14px;line-height:23px;color:#ee0000;padding-left:2px;font-weight:bold;">3.9</div>
<div class="t" style="left:1327px;top:636px;font-size:13px;line-height:13px;color:#000;font-weight:bold;">expected on</div>
<div class="ed" style="left:1415px;top:633px;width:48px;height:25px;font-size:14px;line-height:23px;color:#000;padding-left:2px;font-weight:bold;">1.8</div>
<div class="t" style="left:1471px;top:636px;font-size:13px;line-height:13px;color:#000;font-weight:bold;">Mag drop</div>
<div class="t" style="left:1567px;top:636px;font-size:13px;line-height:13px;color:#000;font-weight:bold;">Frame exposure</div>
<div class="ed" style="left:1687px;top:633px;width:48px;height:25px;font-size:14px;line-height:23px;color:#000;padding-left:2px;font-weight:bold;">253</div>
<div class="t" style="left:1743px;top:636px;font-size:13px;line-height:13px;color:#000;font-weight:bold;">msec</div>
<div class="t" style="left:1055px;top:668px;font-size:13px;line-height:13px;color:#000;font-weight:bold;">Fresnel</div>
<div class="t" style="left:1055px;top:684px;font-size:13px;line-height:13px;color:#000;font-weight:bold;">Number</div>
<div class="ed" style="left:1111px;top:672px;width:48px;height:25px;font-size:14px;line-height:23px;color:#000;padding-left:2px;font-weight:bold;">1866</div>
<div class="t" style="left:1175px;top:668px;font-size:13px;line-height:13px;color:#000;font-weight:bold;">Lower Limit</div>
<div class="t" style="left:1183px;top:684px;font-size:13px;line-height:13px;color:#000;font-weight:bold;">for detect</div>
<div class="ed" style="left:1255px;top:672px;width:56px;height:25px;font-size:14px;line-height:23px;color:#0000ee;padding-left:2px;font-weight:bold;">1530</div>
<div class="t" style="left:1312px;top:677px;font-size:13px;line-height:13px;color:#000;font-weight:bold;">msec</div>
<div class="t" style="left:1359px;top:669px;font-size:13px;line-height:13px;color:#000;font-weight:bold;">Predicted</div>
<div class="t" style="left:1359px;top:684px;font-size:13px;line-height:13px;color:#000;font-weight:bold;letter-spacing:-0.3px">Time Error</div>
<div class="ed" style="left:1432px;top:672px;width:63px;height:25px;font-size:14px;line-height:23px;color:#ee0000;padding-left:2px;font-weight:bold;">263</div>
<div class="t" style="left:1496px;top:684px;font-size:13px;line-height:13px;color:#000;font-weight:bold;">msec</div>
<div class="t" style="left:1543px;top:668px;font-size:13px;line-height:13px;color:#000;font-weight:bold;">Expected Error for</div>
<div class="t" style="left:1543px;top:684px;font-size:13px;line-height:13px;color:#000;font-weight:bold;">Analyzing event time</div>
<div class="ed" style="left:1687px;top:672px;width:48px;height:25px;font-size:14px;line-height:23px;color:#000;padding-left:2px;font-weight:bold;">76.8</div>
<div class="t" style="left:1740px;top:684px;font-size:13px;line-height:13px;color:#000;font-weight:bold;">msec</div></body></html>
